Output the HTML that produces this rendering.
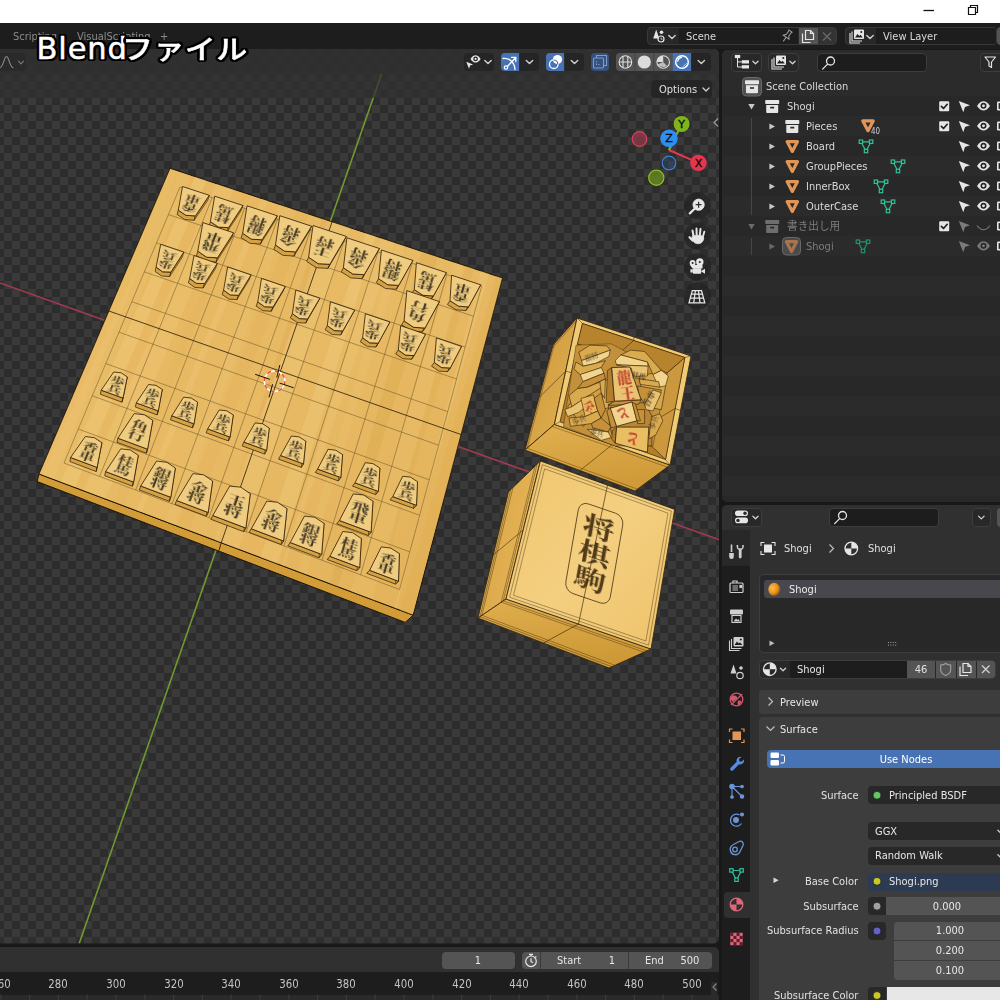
<!DOCTYPE html><html lang="ja"><head><meta charset="utf-8"><title>Blend</title><style>html,body{margin:0;padding:0;background:#181818;}
body{width:1000px;height:1000px;overflow:hidden;position:relative;font-family:"DejaVu Sans","Liberation Sans","Noto Sans CJK JP",sans-serif;font-size:11.2px;color:#d9d9d9;}
#root{position:absolute;left:0;top:0;width:1000px;height:1000px;overflow:hidden;background:#181818;}
.abs{position:absolute;}
.t{position:absolute;white-space:nowrap;line-height:14px;height:14px;transform:scaleX(.885);transform-origin:0 50%;color:#d9d9d9;}
.t.r{transform-origin:100% 50%;text-align:right;}
.t.c{transform-origin:50% 50%;text-align:center;}
.fld{position:absolute;border-radius:4px;box-sizing:border-box;}
svg{display:block;overflow:visible;}
</style></head><body><div id="root"><div class="abs" style="left:0.0px;top:0.0px;width:1000.0px;height:23.0px;background:#fff;border-radius:0px;"></div><svg class="abs" style="left:915.0px;top:0.0px;" width="85.0" height="23.0" viewBox="0 0 85.0 23.0"><path d="M8.500 10.500h10.500" stroke="#111" stroke-width="1.300" fill="none"/><path d="M53.500 7.500h7v7h-7zM55.500 7.500v-2h7v7h-2" stroke="#111" stroke-width="1.200" fill="none"/></svg><div class="abs" style="left:0.0px;top:23.0px;width:1000.0px;height:26.0px;background:#1d1d1d;border-radius:0px;"></div><span class="t " style="left:13.0px;top:29.9px;color:#8c8c8c">Scripting</span><span class="t " style="left:77.0px;top:29.9px;color:#8c8c8c">VisualScripting</span><span class="t " style="left:160.0px;top:29.9px;color:#8c8c8c">+</span><div class="abs" style="left:647.0px;top:27.0px;width:190.0px;height:18.0px;background:#282828;border-radius:4px;border:1px solid #3a3a3a;box-sizing:border-box"></div><div class="abs" style="left:679.0px;top:28.0px;width:119.0px;height:16.0px;background:#1d1d1d;border-radius:0px;"></div><div class="abs" style="left:798.5px;top:28.0px;width:19.5px;height:16.0px;background:#545454;border-radius:0px;"></div><div class="abs" style="left:818.0px;top:28.0px;width:18.0px;height:16.0px;background:#333;border-radius:0 3px 3px 0;"></div><svg class="abs" style="left:0.0px;top:0.0px;pointer-events:none" width="1000.0" height="50.0" viewBox="0 0 1000.0 50.0"><g transform="translate(652 29)" fill="#e6e6e6"><path d="M4.200 0.500L7.200 9.500H1.200z"/><circle cx="9.500" cy="3.200" r="1.800"/><circle cx="9" cy="10" r="3" fill="none" stroke="#e6e6e6" stroke-width="1.200"/><path d="M9 8.500v1.700h1.500" fill="none" stroke="#e6e6e6" stroke-width=".8"/></g><path d="M668.8 35.4l3.2 3.2l3.2 -3.2" fill="none" stroke="#d0d0d0" stroke-width="1.4" stroke-linecap="round" stroke-linejoin="round"/><g transform="translate(780 29) rotate(35 7 7)" fill="none" stroke="#9a9a9a" stroke-width="1.100"><path d="M4.500 1h5M5.500 1v5l-2 2.500h7l-2-2.500v-5M7 8.500v5"/></g><g transform="translate(801.500 29.500)" fill="none" stroke="#e6e6e6" stroke-width="1.200"><path d="M1 4v9h8"/><path d="M4 1h5l3 3v6h-8z"/><path d="M9 1v3h3"/></g><path d="M823 32.500l8 8M831 32.500l-8 8" stroke="#6a6a6a" stroke-width="1.300"/></svg><span class="t " style="left:686.0px;top:29.9px">Scene</span><div class="abs" style="left:844.5px;top:27.0px;width:152.0px;height:18.0px;background:#282828;border-radius:4px;border:1px solid #3a3a3a;box-sizing:border-box"></div><div class="abs" style="left:876.0px;top:28.0px;width:119.5px;height:16.0px;background:#1d1d1d;border-radius:0 3px 3px 0;"></div><div class="abs" style="left:996.5px;top:27.0px;width:10.0px;height:18.0px;background:#545454;border-radius:4px 0 0 4px;"></div><svg class="abs" style="left:0.0px;top:0.0px;pointer-events:none" width="1000.0" height="50.0" viewBox="0 0 1000.0 50.0"><g transform="translate(849.0 29.0)"><path d="M1 4v10h10M3 2.500v9.500h10" fill="none" stroke="#e6e6e6" stroke-width="1.1"/><rect x="5" y="0.500" width="10" height="9.500" rx="1" fill="#e6e6e6"/><path d="M6 8.500l2.500-3.500l1.800 2l1.200-1.300l2.300 2.800z" fill="#1d1d1d"/><circle cx="12.300" cy="3" r="1" fill="#1d1d1d"/></g><path d="M866.8 35.4l3.2 3.2l3.2 -3.2" fill="none" stroke="#d0d0d0" stroke-width="1.4" stroke-linecap="round" stroke-linejoin="round"/></svg><span class="t " style="left:883.0px;top:29.9px">View Layer</span><svg id="vp" width="720" height="895" viewBox="0 49 720 895" style="position:absolute;left:0;top:49px" font-family="'Noto Serif CJK JP','Noto Serif CJK SC',serif" font-weight="700"><defs><pattern id="chk" x="4" y="1" width="16" height="16" patternUnits="userSpaceOnUse"><rect width="16" height="16" fill="#3a3a3a"/><rect width="8" height="8" fill="#2d2d2d"/><rect x="8" y="8" width="8" height="8" fill="#2d2d2d"/></pattern><clipPath id="vpc"><rect x="-10" y="49" width="729" height="894.5" rx="5"/></clipPath></defs><g clip-path="url(#vpc)"><rect x="0" y="49" width="720" height="895" fill="url(#chk)"/><line x1="0" y1="283" x2="720" y2="540" stroke="#a03a50" stroke-width="1.6"/><line x1="382.6" y1="71" x2="79.2" y2="943.5" stroke="#6f9a2e" stroke-width="1.6"/><defs><linearGradient id="wood" x1="0" y1="0" x2="1" y2="1"><stop offset="0" stop-color="#e6b65e"/><stop offset=".5" stop-color="#e8ba64"/><stop offset="1" stop-color="#e2b158"/></linearGradient><clipPath id="bclip"><polygon points="170,168.3 502.5,278 413.2,615.2 39,474"/></clipPath><filter id="tb" x="-20%" y="-20%" width="140%" height="140%"><feGaussianBlur stdDeviation="0.42"/></filter></defs><polygon points="39.0,474.0 413.2,615.2 405.2,622.4 37.0,481.5" fill="#d29c38" stroke="#1e1404" stroke-width="1.0"/><polygon points="170.0,168.3 502.5,278.0 413.2,615.2 39.0,474.0" fill="url(#wood)" stroke="#1e1404" stroke-width="1.0"/><g clip-path="url(#bclip)"><polygon points="169.8,168.3 178.0,171.0 53.8,479.3 30.9,470.6" fill="#f2cf82" opacity="0.18"/><polygon points="179.5,171.5 191.3,175.3 61.5,482.2 42.4,475.0" fill="#f4d48a" opacity="0.14"/><polygon points="195.2,176.6 206.6,180.3 75.1,487.4 60.6,481.9" fill="#f6d991" opacity="0.27"/><polygon points="216.7,183.6 233.7,189.1 105.4,498.9 83.3,490.5" fill="#f4d48a" opacity="0.22"/><polygon points="242.7,192.0 248.5,193.9 123.5,505.8 113.6,502.0" fill="#dba84c" opacity="0.13"/><polygon points="261.8,198.2 268.2,200.4 141.8,512.7 136.2,510.6" fill="#f4d48a" opacity="0.21"/><polygon points="279.9,204.1 291.8,208.0 174.3,525.1 165.6,521.8" fill="#f4d48a" opacity="0.14"/><polygon points="297.0,209.7 309.2,213.7 189.3,530.8 176.8,526.0" fill="#dba84c" opacity="0.17"/><polygon points="322.2,217.9 327.3,219.6 219.9,542.4 216.8,541.2" fill="#d39d40" opacity="0.21"/><polygon points="332.1,221.2 350.2,227.1 238.4,549.4 214.7,540.4" fill="#f6d991" opacity="0.20"/><polygon points="365.9,232.2 376.0,235.5 277.6,564.3 260.4,557.8" fill="#f6d991" opacity="0.25"/><polygon points="381.3,237.2 395.5,241.8 284.2,566.8 282.1,566.0" fill="#f4d48a" opacity="0.20"/><polygon points="397.1,242.3 405.1,245.0 306.1,575.2 298.1,572.1" fill="#f6d991" opacity="0.11"/><polygon points="422.1,250.5 438.3,255.8 337.8,587.2 329.9,584.2" fill="#d39d40" opacity="0.24"/><polygon points="454.5,261.1 464.0,264.1 375.1,601.4 350.5,592.1" fill="#f4d48a" opacity="0.12"/><polygon points="466.2,264.9 474.1,267.4 374.7,601.2 372.3,600.3" fill="#dba84c" opacity="0.28"/><polygon points="481.1,269.7 489.4,272.4 394.2,608.7 396.3,609.5" fill="#f2cf82" opacity="0.26"/><polygon points="496.7,274.8 506.3,277.9 411.3,615.1 399.9,610.8" fill="#dba84c" opacity="0.29"/></g><line x1="180.0" y1="187.0" x2="64.0" y2="463.0" stroke="#6b5526" stroke-width="0.7" opacity="0.75"/><line x1="180.0" y1="187.0" x2="481.7" y2="286.0" stroke="#6b5526" stroke-width="0.7" opacity="0.75"/><line x1="212.2" y1="197.6" x2="99.6" y2="476.4" stroke="#6b5526" stroke-width="0.7" opacity="0.75"/><line x1="168.4" y1="214.6" x2="473.5" y2="316.2" stroke="#6b5526" stroke-width="0.7" opacity="0.75"/><line x1="244.7" y1="208.2" x2="135.7" y2="490.0" stroke="#6b5526" stroke-width="0.7" opacity="0.75"/><line x1="156.5" y1="242.9" x2="465.2" y2="347.1" stroke="#6b5526" stroke-width="0.7" opacity="0.75"/><line x1="277.6" y1="219.0" x2="172.1" y2="503.8" stroke="#6b5526" stroke-width="0.7" opacity="0.75"/><line x1="144.3" y1="271.9" x2="456.6" y2="379.0" stroke="#6b5526" stroke-width="0.7" opacity="0.75"/><line x1="310.7" y1="229.9" x2="209.0" y2="517.6" stroke="#6b5526" stroke-width="0.7" opacity="0.75"/><line x1="131.8" y1="301.7" x2="447.7" y2="411.6" stroke="#6b5526" stroke-width="0.7" opacity="0.75"/><line x1="344.2" y1="240.9" x2="246.2" y2="531.7" stroke="#6b5526" stroke-width="0.7" opacity="0.75"/><line x1="119.0" y1="332.2" x2="438.6" y2="445.2" stroke="#6b5526" stroke-width="0.7" opacity="0.75"/><line x1="378.1" y1="252.0" x2="283.9" y2="545.9" stroke="#6b5526" stroke-width="0.7" opacity="0.75"/><line x1="105.8" y1="363.6" x2="429.3" y2="479.8" stroke="#6b5526" stroke-width="0.7" opacity="0.75"/><line x1="412.3" y1="263.2" x2="322.0" y2="560.3" stroke="#6b5526" stroke-width="0.7" opacity="0.75"/><line x1="92.2" y1="395.8" x2="419.7" y2="515.3" stroke="#6b5526" stroke-width="0.7" opacity="0.75"/><line x1="446.8" y1="274.6" x2="360.6" y2="574.8" stroke="#6b5526" stroke-width="0.7" opacity="0.75"/><line x1="78.3" y1="429.0" x2="409.8" y2="551.9" stroke="#6b5526" stroke-width="0.7" opacity="0.75"/><line x1="481.7" y1="286.0" x2="399.6" y2="589.5" stroke="#6b5526" stroke-width="0.7" opacity="0.75"/><line x1="64.0" y1="463.0" x2="399.6" y2="589.5" stroke="#6b5526" stroke-width="0.7" opacity="0.75"/><line x1="332.3" y1="221.2" x2="221.2" y2="542.9" stroke="#2a1c05" stroke-width="0.9" opacity="0.9"/><line x1="108.6" y1="310.9" x2="461.8" y2="434.8" stroke="#2a1c05" stroke-width="0.9" opacity="0.9"/><line x1="221.2" y1="542.9" x2="219.0" y2="550.3" stroke="#2a1c05" stroke-width="0.9"/><polygon points="178.3,210.2 185.9,215.3 195.4,215.9 194.2,220.3 184.8,219.5 177.2,214.6" fill="#d4a144" stroke="#2a1b05" stroke-width="0.7" stroke-linejoin="round"/><polygon points="209.3,195.3 195.4,215.9 194.2,220.3 207.9,200.3" fill="#b98a30" stroke="#2a1b05" stroke-width="0.5" stroke-linejoin="round"/><polygon points="209.3,195.3 182.5,186.5 178.3,210.2 185.9,215.3 195.4,215.9" fill="#efcc80" stroke="#2a1b05" stroke-width="0.8" stroke-linejoin="round"/><g transform="matrix(-1.0280 -0.3398 0.2341 -0.5682 191.09 203.23)" font-size="14.6" text-anchor="middle" fill="#251f14" opacity=".84" filter="url(#tb)" font-weight="700"><text x="0" y="-1.3">香</text><text x="0" y="12.6">車</text></g><polygon points="210.4,221.7 218.5,227.1 228.5,227.7 227.1,232.0 217.2,231.3 209.1,226.1" fill="#d4a144" stroke="#2a1b05" stroke-width="0.7" stroke-linejoin="round"/><polygon points="243.0,205.5 228.5,227.7 227.1,232.0 241.3,210.4" fill="#b98a30" stroke="#2a1b05" stroke-width="0.5" stroke-linejoin="round"/><polygon points="243.0,205.5 214.7,196.2 210.4,221.7 218.5,227.1 228.5,227.7" fill="#efcc80" stroke="#2a1b05" stroke-width="0.8" stroke-linejoin="round"/><g transform="matrix(-1.0382 -0.3432 0.2268 -0.5738 223.77 214.02)" font-size="15.2" text-anchor="middle" fill="#251f14" opacity=".84" filter="url(#tb)" font-weight="700"><text x="0" y="-1.4">桂</text><text x="0" y="13.0">馬</text></g><polygon points="242.7,233.3 251.4,239.2 262.1,239.8 260.4,244.1 249.9,243.3 241.1,237.7" fill="#d4a144" stroke="#2a1b05" stroke-width="0.7" stroke-linejoin="round"/><polygon points="277.3,215.8 262.1,239.8 260.4,244.1 275.5,220.6" fill="#b98a30" stroke="#2a1b05" stroke-width="0.5" stroke-linejoin="round"/><polygon points="277.3,215.8 247.0,205.8 242.7,233.3 251.4,239.2 262.1,239.8" fill="#efcc80" stroke="#2a1b05" stroke-width="0.8" stroke-linejoin="round"/><g transform="matrix(-1.0486 -0.3466 0.2194 -0.5794 256.77 224.93)" font-size="15.8" text-anchor="middle" fill="#251f14" opacity=".84" filter="url(#tb)" font-weight="700"><text x="0" y="-1.4">銀</text><text x="0" y="13.6">将</text></g><polygon points="275.5,245.1 284.6,251.2 295.8,251.9 294.0,256.1 282.9,255.3 273.8,249.4" fill="#d4a144" stroke="#2a1b05" stroke-width="0.7" stroke-linejoin="round"/><polygon points="311.6,226.2 295.8,251.9 294.0,256.1 309.5,230.9" fill="#b98a30" stroke="#2a1b05" stroke-width="0.5" stroke-linejoin="round"/><polygon points="311.6,226.2 279.8,215.7 275.5,245.1 284.6,251.2 295.8,251.9" fill="#efcc80" stroke="#2a1b05" stroke-width="0.8" stroke-linejoin="round"/><g transform="matrix(-1.0591 -0.3501 0.2119 -0.5852 290.11 235.96)" font-size="16.3" text-anchor="middle" fill="#251f14" opacity=".84" filter="url(#tb)" font-weight="700"><text x="0" y="-1.5">金</text><text x="0" y="14.0">将</text></g><polygon points="308.6,257.2 318.2,263.7 329.9,264.3 327.9,268.4 316.3,267.7 306.7,261.4" fill="#d4a144" stroke="#2a1b05" stroke-width="0.7" stroke-linejoin="round"/><polygon points="346.3,236.4 329.9,264.3 327.9,268.4 344.0,241.1" fill="#b98a30" stroke="#2a1b05" stroke-width="0.5" stroke-linejoin="round"/><polygon points="346.3,236.4 313.0,225.5 308.6,257.2 318.2,263.7 329.9,264.3" fill="#efcc80" stroke="#2a1b05" stroke-width="0.8" stroke-linejoin="round"/><g transform="matrix(-1.0698 -0.3536 0.2042 -0.5910 323.77 247.10)" font-size="17.0" text-anchor="middle" fill="#251f14" opacity=".84" filter="url(#tb)" font-weight="700"><text x="0" y="-1.5">王</text><text x="0" y="14.6">将</text></g><polygon points="343.4,267.8 352.8,274.0 364.2,274.7 362.0,278.7 350.8,277.9 341.3,271.8" fill="#d4a144" stroke="#2a1b05" stroke-width="0.7" stroke-linejoin="round"/><polygon points="379.4,248.5 364.2,274.7 362.0,278.7 376.9,253.0" fill="#b98a30" stroke="#2a1b05" stroke-width="0.5" stroke-linejoin="round"/><polygon points="379.4,248.5 346.9,237.8 343.4,267.8 352.8,274.0 364.2,274.7" fill="#efcc80" stroke="#2a1b05" stroke-width="0.8" stroke-linejoin="round"/><g transform="matrix(-1.0807 -0.3572 0.1963 -0.5970 357.77 258.36)" font-size="16.3" text-anchor="middle" fill="#251f14" opacity=".84" filter="url(#tb)" font-weight="700"><text x="0" y="-1.5">金</text><text x="0" y="14.0">将</text></g><polygon points="378.5,278.7 387.7,284.7 398.7,285.4 396.3,289.3 385.5,288.5 376.3,282.6" fill="#d4a144" stroke="#2a1b05" stroke-width="0.7" stroke-linejoin="round"/><polygon points="412.9,260.4 398.7,285.4 396.3,289.3 410.2,264.9" fill="#b98a30" stroke="#2a1b05" stroke-width="0.5" stroke-linejoin="round"/><polygon points="412.9,260.4 381.4,250.0 378.5,278.7 387.7,284.7 398.7,285.4" fill="#efcc80" stroke="#2a1b05" stroke-width="0.8" stroke-linejoin="round"/><g transform="matrix(-1.0917 -0.3608 0.1882 -0.6030 392.11 269.74)" font-size="15.8" text-anchor="middle" fill="#251f14" opacity=".84" filter="url(#tb)" font-weight="700"><text x="0" y="-1.4">銀</text><text x="0" y="13.6">将</text></g><polygon points="414.3,289.6 423.0,295.3 433.4,296.0 430.8,299.8 420.6,299.0 411.8,293.5" fill="#d4a144" stroke="#2a1b05" stroke-width="0.7" stroke-linejoin="round"/><polygon points="446.4,272.6 433.4,296.0 430.8,299.8 443.5,276.9" fill="#b98a30" stroke="#2a1b05" stroke-width="0.5" stroke-linejoin="round"/><polygon points="446.4,272.6 416.4,262.7 414.3,289.6 423.0,295.3 433.4,296.0" fill="#efcc80" stroke="#2a1b05" stroke-width="0.8" stroke-linejoin="round"/><g transform="matrix(-1.1029 -0.3645 0.1800 -0.6091 426.80 281.25)" font-size="15.2" text-anchor="middle" fill="#251f14" opacity=".84" filter="url(#tb)" font-weight="700"><text x="0" y="-1.4">桂</text><text x="0" y="13.0">馬</text></g><polygon points="450.0,300.7 458.6,306.2 468.6,306.9 465.8,310.6 456.0,309.8 447.4,304.5" fill="#d4a144" stroke="#2a1b05" stroke-width="0.7" stroke-linejoin="round"/><polygon points="480.7,284.8 468.6,306.9 465.8,310.6 477.6,289.0" fill="#b98a30" stroke="#2a1b05" stroke-width="0.5" stroke-linejoin="round"/><polygon points="480.7,284.8 451.6,275.2 450.0,300.7 458.6,306.2 468.6,306.9" fill="#efcc80" stroke="#2a1b05" stroke-width="0.8" stroke-linejoin="round"/><g transform="matrix(-1.1142 -0.3683 0.1716 -0.6153 461.83 292.87)" font-size="14.6" text-anchor="middle" fill="#251f14" opacity=".84" filter="url(#tb)" font-weight="700"><text x="0" y="-1.3">香</text><text x="0" y="12.6">車</text></g><polygon points="197.8,251.2 206.6,257.2 217.5,257.8 216.1,262.2 205.3,261.4 196.5,255.6" fill="#d4a144" stroke="#2a1b05" stroke-width="0.7" stroke-linejoin="round"/><polygon points="233.6,232.8 217.5,257.8 216.1,262.2 232.0,237.7" fill="#b98a30" stroke="#2a1b05" stroke-width="0.5" stroke-linejoin="round"/><polygon points="233.6,232.8 202.9,222.6 197.8,251.2 206.6,257.2 217.5,257.8" fill="#efcc80" stroke="#2a1b05" stroke-width="0.8" stroke-linejoin="round"/><g transform="matrix(-1.0497 -0.3520 0.2327 -0.5885 212.55 242.37)" font-size="16.0" text-anchor="middle" fill="#251f14" opacity=".84" filter="url(#tb)" font-weight="700"><text x="0" y="-1.4">飛</text><text x="0" y="13.8">車</text></g><polygon points="404.1,321.0 413.6,327.3 425.0,328.1 422.3,331.8 411.1,331.0 401.6,324.8" fill="#d4a144" stroke="#2a1b05" stroke-width="0.7" stroke-linejoin="round"/><polygon points="439.4,301.6 425.0,328.1 422.3,331.8 436.4,305.9" fill="#b98a30" stroke="#2a1b05" stroke-width="0.5" stroke-linejoin="round"/><polygon points="439.4,301.6 406.8,290.6 404.1,321.0 413.6,327.3 425.0,328.1" fill="#efcc80" stroke="#2a1b05" stroke-width="0.8" stroke-linejoin="round"/><g transform="matrix(-1.1159 -0.3743 0.1848 -0.6253 417.93 311.38)" font-size="16.0" text-anchor="middle" fill="#251f14" opacity=".84" filter="url(#tb)" font-weight="700"><text x="0" y="-1.4">角</text><text x="0" y="13.8">行</text></g><polygon points="156.1,267.1 162.6,271.8 170.9,272.1 169.7,276.5 161.6,276.0 155.1,271.5" fill="#d4a144" stroke="#2a1b05" stroke-width="0.7" stroke-linejoin="round"/><polygon points="183.8,252.1 170.9,272.1 169.7,276.5 182.4,257.1" fill="#b98a30" stroke="#2a1b05" stroke-width="0.5" stroke-linejoin="round"/><polygon points="183.8,252.1 160.7,244.3 156.1,267.1 162.6,271.8 170.9,272.1" fill="#efcc80" stroke="#2a1b05" stroke-width="0.8" stroke-linejoin="round"/><g transform="matrix(-1.0507 -0.3576 0.2463 -0.5977 167.63 260.09)" font-size="14.0" text-anchor="middle" fill="#251f14" opacity=".84" filter="url(#tb)" font-weight="700"><text x="0" y="-1.3">歩</text><text x="0" y="12.0">兵</text></g><polygon points="189.7,278.5 196.3,283.3 204.6,283.6 203.2,288.0 195.0,287.5 188.4,282.9" fill="#d4a144" stroke="#2a1b05" stroke-width="0.7" stroke-linejoin="round"/><polygon points="217.3,263.4 204.6,283.6 203.2,288.0 215.7,268.4" fill="#b98a30" stroke="#2a1b05" stroke-width="0.5" stroke-linejoin="round"/><polygon points="217.3,263.4 194.0,255.5 189.7,278.5 196.3,283.3 204.6,283.6" fill="#efcc80" stroke="#2a1b05" stroke-width="0.8" stroke-linejoin="round"/><g transform="matrix(-1.0614 -0.3613 0.2387 -0.6038 201.04 271.45)" font-size="14.0" text-anchor="middle" fill="#251f14" opacity=".84" filter="url(#tb)" font-weight="700"><text x="0" y="-1.3">歩</text><text x="0" y="12.0">兵</text></g><polygon points="223.6,290.1 230.2,294.9 238.6,295.3 237.0,299.6 228.8,299.1 222.1,294.5" fill="#d4a144" stroke="#2a1b05" stroke-width="0.7" stroke-linejoin="round"/><polygon points="251.1,274.9 238.6,295.3 237.0,299.6 249.3,279.7" fill="#b98a30" stroke="#2a1b05" stroke-width="0.5" stroke-linejoin="round"/><polygon points="251.1,274.9 227.6,266.9 223.6,290.1 230.2,294.9 238.6,295.3" fill="#efcc80" stroke="#2a1b05" stroke-width="0.8" stroke-linejoin="round"/><g transform="matrix(-1.0722 -0.3650 0.2310 -0.6099 234.80 282.94)" font-size="14.0" text-anchor="middle" fill="#251f14" opacity=".84" filter="url(#tb)" font-weight="700"><text x="0" y="-1.3">歩</text><text x="0" y="12.0">兵</text></g><polygon points="257.8,301.9 264.6,306.7 273.0,307.1 271.2,311.3 262.9,310.7 256.1,306.1" fill="#d4a144" stroke="#2a1b05" stroke-width="0.7" stroke-linejoin="round"/><polygon points="285.3,286.5 273.0,307.1 271.2,311.3 283.2,291.2" fill="#b98a30" stroke="#2a1b05" stroke-width="0.5" stroke-linejoin="round"/><polygon points="285.3,286.5 261.5,278.4 257.8,301.9 264.6,306.7 273.0,307.1" fill="#efcc80" stroke="#2a1b05" stroke-width="0.8" stroke-linejoin="round"/><g transform="matrix(-1.0833 -0.3688 0.2231 -0.6161 268.90 294.56)" font-size="14.0" text-anchor="middle" fill="#251f14" opacity=".84" filter="url(#tb)" font-weight="700"><text x="0" y="-1.3">歩</text><text x="0" y="12.0">兵</text></g><polygon points="292.4,313.7 299.3,318.6 307.7,319.0 305.7,323.1 297.3,322.6 290.4,317.9" fill="#d4a144" stroke="#2a1b05" stroke-width="0.7" stroke-linejoin="round"/><polygon points="319.8,298.2 307.7,319.0 305.7,323.1 317.5,302.8" fill="#b98a30" stroke="#2a1b05" stroke-width="0.5" stroke-linejoin="round"/><polygon points="319.8,298.2 295.8,290.0 292.4,313.7 299.3,318.6 307.7,319.0" fill="#efcc80" stroke="#2a1b05" stroke-width="0.8" stroke-linejoin="round"/><g transform="matrix(-1.0945 -0.3726 0.2150 -0.6225 303.35 306.31)" font-size="14.0" text-anchor="middle" fill="#251f14" opacity=".84" filter="url(#tb)" font-weight="700"><text x="0" y="-1.3">歩</text><text x="0" y="12.0">兵</text></g><polygon points="327.3,325.7 334.3,330.6 342.8,331.0 340.6,335.0 332.2,334.5 325.2,329.8" fill="#d4a144" stroke="#2a1b05" stroke-width="0.7" stroke-linejoin="round"/><polygon points="354.7,310.0 342.8,331.0 340.6,335.0 352.2,314.6" fill="#b98a30" stroke="#2a1b05" stroke-width="0.5" stroke-linejoin="round"/><polygon points="354.7,310.0 330.4,301.8 327.3,325.7 334.3,330.6 342.8,331.0" fill="#efcc80" stroke="#2a1b05" stroke-width="0.8" stroke-linejoin="round"/><g transform="matrix(-1.1059 -0.3765 0.2068 -0.6289 338.15 318.18)" font-size="14.0" text-anchor="middle" fill="#251f14" opacity=".84" filter="url(#tb)" font-weight="700"><text x="0" y="-1.3">歩</text><text x="0" y="12.0">兵</text></g><polygon points="362.6,337.8 369.7,342.8 378.3,343.2 375.8,347.1 367.4,346.6 360.3,341.8" fill="#d4a144" stroke="#2a1b05" stroke-width="0.7" stroke-linejoin="round"/><polygon points="389.9,322.0 378.3,343.2 375.8,347.1 387.2,326.4" fill="#b98a30" stroke="#2a1b05" stroke-width="0.5" stroke-linejoin="round"/><polygon points="389.9,322.0 365.4,313.7 362.6,337.8 369.7,342.8 378.3,343.2" fill="#efcc80" stroke="#2a1b05" stroke-width="0.8" stroke-linejoin="round"/><g transform="matrix(-1.1175 -0.3804 0.1983 -0.6354 373.31 330.18)" font-size="14.0" text-anchor="middle" fill="#251f14" opacity=".84" filter="url(#tb)" font-weight="700"><text x="0" y="-1.3">歩</text><text x="0" y="12.0">兵</text></g><polygon points="398.3,350.1 405.5,355.1 414.1,355.6 411.5,359.3 402.9,358.7 395.7,353.9" fill="#d4a144" stroke="#2a1b05" stroke-width="0.7" stroke-linejoin="round"/><polygon points="425.5,334.2 414.1,355.6 411.5,359.3 422.5,338.4" fill="#b98a30" stroke="#2a1b05" stroke-width="0.5" stroke-linejoin="round"/><polygon points="425.5,334.2 400.7,325.7 398.3,350.1 405.5,355.1 414.1,355.6" fill="#efcc80" stroke="#2a1b05" stroke-width="0.8" stroke-linejoin="round"/><g transform="matrix(-1.1292 -0.3844 0.1897 -0.6420 408.83 342.32)" font-size="14.0" text-anchor="middle" fill="#251f14" opacity=".84" filter="url(#tb)" font-weight="700"><text x="0" y="-1.3">歩</text><text x="0" y="12.0">兵</text></g><polygon points="434.3,362.5 441.6,367.6 450.3,368.0 447.5,371.6 438.9,371.1 431.5,366.2" fill="#d4a144" stroke="#2a1b05" stroke-width="0.7" stroke-linejoin="round"/><polygon points="461.5,346.4 450.3,368.0 447.5,371.6 458.3,350.5" fill="#b98a30" stroke="#2a1b05" stroke-width="0.5" stroke-linejoin="round"/><polygon points="461.5,346.4 436.4,337.9 434.3,362.5 441.6,367.6 450.3,368.0" fill="#efcc80" stroke="#2a1b05" stroke-width="0.8" stroke-linejoin="round"/><g transform="matrix(-1.1412 -0.3885 0.1809 -0.6488 444.71 354.58)" font-size="14.0" text-anchor="middle" fill="#251f14" opacity=".84" filter="url(#tb)" font-weight="700"><text x="0" y="-1.3">歩</text><text x="0" y="12.0">兵</text></g><polygon points="101.2,390.2 123.0,398.1 122.0,402.2 100.4,394.3" fill="#d4a144" stroke="#2a1b05" stroke-width="0.7" stroke-linejoin="round"/><polygon points="123.0,398.1 127.3,376.9 126.7,379.6 122.0,402.2" fill="#b98a30" stroke="#2a1b05" stroke-width="0.5" stroke-linejoin="round"/><polygon points="101.2,390.2 123.0,398.1 127.3,376.9 121.2,372.8 113.7,372.0" fill="#efcc80" stroke="#2a1b05" stroke-width="0.8" stroke-linejoin="round"/><g transform="matrix(1.0990 0.3978 -0.2737 0.6643 116.05 384.99)" font-size="12.8" text-anchor="middle" fill="#251f14" opacity=".84" filter="url(#tb)" font-weight="700"><text x="0" y="-1.2">歩</text><text x="0" y="11.0">兵</text></g><polygon points="136.3,402.9 158.3,410.9 157.1,414.9 135.3,407.0" fill="#d4a144" stroke="#2a1b05" stroke-width="0.7" stroke-linejoin="round"/><polygon points="158.3,410.9 162.3,389.4 161.5,392.1 157.1,414.9" fill="#b98a30" stroke="#2a1b05" stroke-width="0.5" stroke-linejoin="round"/><polygon points="136.3,402.9 158.3,410.9 162.3,389.4 156.0,385.4 148.5,384.5" fill="#efcc80" stroke="#2a1b05" stroke-width="0.8" stroke-linejoin="round"/><g transform="matrix(1.1108 0.4021 -0.2654 0.6714 151.08 397.66)" font-size="12.8" text-anchor="middle" fill="#251f14" opacity=".84" filter="url(#tb)" font-weight="700"><text x="0" y="-1.2">歩</text><text x="0" y="11.0">兵</text></g><polygon points="171.8,415.8 194.0,423.9 192.5,427.8 170.5,419.8" fill="#d4a144" stroke="#2a1b05" stroke-width="0.7" stroke-linejoin="round"/><polygon points="194.0,423.9 197.6,402.2 196.6,404.8 192.5,427.8" fill="#b98a30" stroke="#2a1b05" stroke-width="0.5" stroke-linejoin="round"/><polygon points="171.8,415.8 194.0,423.9 197.6,402.2 191.2,398.0 183.6,397.2" fill="#efcc80" stroke="#2a1b05" stroke-width="0.8" stroke-linejoin="round"/><g transform="matrix(1.1228 0.4065 -0.2570 0.6786 186.49 410.49)" font-size="12.8" text-anchor="middle" fill="#251f14" opacity=".84" filter="url(#tb)" font-weight="700"><text x="0" y="-1.2">歩</text><text x="0" y="11.0">兵</text></g><polygon points="207.7,428.9 230.1,437.1 228.4,440.9 206.1,432.8" fill="#d4a144" stroke="#2a1b05" stroke-width="0.7" stroke-linejoin="round"/><polygon points="230.1,437.1 233.3,415.0 232.1,417.6 228.4,440.9" fill="#b98a30" stroke="#2a1b05" stroke-width="0.5" stroke-linejoin="round"/><polygon points="207.7,428.9 230.1,437.1 233.3,415.0 226.8,410.8 219.2,410.0" fill="#efcc80" stroke="#2a1b05" stroke-width="0.8" stroke-linejoin="round"/><g transform="matrix(1.1350 0.4109 -0.2483 0.6859 222.27 423.46)" font-size="12.8" text-anchor="middle" fill="#251f14" opacity=".84" filter="url(#tb)" font-weight="700"><text x="0" y="-1.2">歩</text><text x="0" y="11.0">兵</text></g><polygon points="243.9,442.1 266.6,450.4 264.6,454.1 242.1,445.9" fill="#d4a144" stroke="#2a1b05" stroke-width="0.7" stroke-linejoin="round"/><polygon points="266.6,450.4 269.3,428.1 268.0,430.5 264.6,454.1" fill="#b98a30" stroke="#2a1b05" stroke-width="0.5" stroke-linejoin="round"/><polygon points="243.9,442.1 266.6,450.4 269.3,428.1 262.7,423.8 255.1,422.9" fill="#efcc80" stroke="#2a1b05" stroke-width="0.8" stroke-linejoin="round"/><g transform="matrix(1.1475 0.4154 -0.2395 0.6933 258.44 436.59)" font-size="12.8" text-anchor="middle" fill="#251f14" opacity=".84" filter="url(#tb)" font-weight="700"><text x="0" y="-1.2">歩</text><text x="0" y="11.0">兵</text></g><polygon points="280.6,455.5 303.5,463.9 301.3,467.4 278.5,459.1" fill="#d4a144" stroke="#2a1b05" stroke-width="0.7" stroke-linejoin="round"/><polygon points="303.5,463.9 305.8,441.2 304.3,443.6 301.3,467.4" fill="#b98a30" stroke="#2a1b05" stroke-width="0.5" stroke-linejoin="round"/><polygon points="280.6,455.5 303.5,463.9 305.8,441.2 299.1,436.9 291.4,436.0" fill="#efcc80" stroke="#2a1b05" stroke-width="0.8" stroke-linejoin="round"/><g transform="matrix(1.1601 0.4200 -0.2304 0.7009 295.00 449.88)" font-size="12.8" text-anchor="middle" fill="#251f14" opacity=".84" filter="url(#tb)" font-weight="700"><text x="0" y="-1.2">歩</text><text x="0" y="11.0">兵</text></g><polygon points="317.6,469.1 340.8,477.5 338.3,480.9 315.2,472.5" fill="#d4a144" stroke="#2a1b05" stroke-width="0.7" stroke-linejoin="round"/><polygon points="340.8,477.5 342.6,454.6 341.0,456.9 338.3,480.9" fill="#b98a30" stroke="#2a1b05" stroke-width="0.5" stroke-linejoin="round"/><polygon points="317.6,469.1 340.8,477.5 342.6,454.6 335.8,450.2 328.1,449.3" fill="#efcc80" stroke="#2a1b05" stroke-width="0.8" stroke-linejoin="round"/><g transform="matrix(1.1729 0.4246 -0.2212 0.7085 331.94 463.32)" font-size="12.8" text-anchor="middle" fill="#251f14" opacity=".84" filter="url(#tb)" font-weight="700"><text x="0" y="-1.2">歩</text><text x="0" y="11.0">兵</text></g><polygon points="355.0,482.8 378.4,491.4 375.7,494.6 352.4,486.1" fill="#d4a144" stroke="#2a1b05" stroke-width="0.7" stroke-linejoin="round"/><polygon points="378.4,491.4 379.9,468.0 378.1,470.2 375.7,494.6" fill="#b98a30" stroke="#2a1b05" stroke-width="0.5" stroke-linejoin="round"/><polygon points="355.0,482.8 378.4,491.4 379.9,468.0 372.9,463.6 365.2,462.7" fill="#efcc80" stroke="#2a1b05" stroke-width="0.8" stroke-linejoin="round"/><g transform="matrix(1.1859 0.4293 -0.2117 0.7163 369.28 476.91)" font-size="12.8" text-anchor="middle" fill="#251f14" opacity=".84" filter="url(#tb)" font-weight="700"><text x="0" y="-1.2">歩</text><text x="0" y="11.0">兵</text></g><polygon points="392.8,496.6 416.5,505.3 413.6,508.4 390.0,499.8" fill="#d4a144" stroke="#2a1b05" stroke-width="0.7" stroke-linejoin="round"/><polygon points="416.5,505.3 417.5,481.7 415.6,483.8 413.6,508.4" fill="#b98a30" stroke="#2a1b05" stroke-width="0.5" stroke-linejoin="round"/><polygon points="392.8,496.6 416.5,505.3 417.5,481.7 410.4,477.1 402.7,476.3" fill="#efcc80" stroke="#2a1b05" stroke-width="0.8" stroke-linejoin="round"/><g transform="matrix(1.1992 0.4341 -0.2020 0.7243 407.03 490.67)" font-size="12.8" text-anchor="middle" fill="#251f14" opacity=".84" filter="url(#tb)" font-weight="700"><text x="0" y="-1.2">歩</text><text x="0" y="11.0">兵</text></g><polygon points="117.9,438.2 147.6,449.2 146.4,453.2 116.9,442.3" fill="#d4a144" stroke="#2a1b05" stroke-width="0.7" stroke-linejoin="round"/><polygon points="147.6,449.2 152.8,420.4 152.0,423.1 146.4,453.2" fill="#b98a30" stroke="#2a1b05" stroke-width="0.5" stroke-linejoin="round"/><polygon points="117.9,438.2 147.6,449.2 152.8,420.4 144.4,414.8 134.2,413.6" fill="#efcc80" stroke="#2a1b05" stroke-width="0.8" stroke-linejoin="round"/><g transform="matrix(1.1239 0.4134 -0.2728 0.6900 137.91 430.92)" font-size="14.6" text-anchor="middle" fill="#251f14" opacity=".84" filter="url(#tb)" font-weight="700"><text x="0" y="-1.3">角</text><text x="0" y="12.5">行</text></g><polygon points="339.4,520.5 371.1,532.3 368.3,535.5 336.7,523.8" fill="#d4a144" stroke="#2a1b05" stroke-width="0.7" stroke-linejoin="round"/><polygon points="371.1,532.3 373.0,501.2 371.2,503.3 368.3,535.5" fill="#b98a30" stroke="#2a1b05" stroke-width="0.5" stroke-linejoin="round"/><polygon points="339.4,520.5 371.1,532.3 373.0,501.2 363.6,495.0 353.2,493.9" fill="#efcc80" stroke="#2a1b05" stroke-width="0.8" stroke-linejoin="round"/><g transform="matrix(1.2010 0.4418 -0.2178 0.7369 358.85 512.48)" font-size="14.6" text-anchor="middle" fill="#251f14" opacity=".84" filter="url(#tb)" font-weight="700"><text x="0" y="-1.3">飛</text><text x="0" y="12.5">車</text></g><polygon points="70.6,457.5 97.1,467.4 96.2,471.5 69.9,461.6" fill="#d4a144" stroke="#2a1b05" stroke-width="0.7" stroke-linejoin="round"/><polygon points="97.1,467.4 101.9,442.7 101.3,445.4 96.2,471.5" fill="#b98a30" stroke="#2a1b05" stroke-width="0.5" stroke-linejoin="round"/><polygon points="70.6,457.5 97.1,467.4 101.9,442.7 94.4,437.7 85.3,436.5" fill="#efcc80" stroke="#2a1b05" stroke-width="0.8" stroke-linejoin="round"/><g transform="matrix(1.1248 0.4205 -0.2891 0.7018 88.48 451.72)" font-size="13.4" text-anchor="middle" fill="#251f14" opacity=".84" filter="url(#tb)" font-weight="700"><text x="0" y="-1.2">香</text><text x="0" y="11.5">車</text></g><polygon points="105.6,471.6 133.6,482.1 132.4,486.2 104.7,475.7" fill="#d4a144" stroke="#2a1b05" stroke-width="0.7" stroke-linejoin="round"/><polygon points="133.6,482.1 138.3,455.3 137.6,458.0 132.4,486.2" fill="#b98a30" stroke="#2a1b05" stroke-width="0.5" stroke-linejoin="round"/><polygon points="105.6,471.6 133.6,482.1 138.3,455.3 130.4,450.0 120.8,448.8" fill="#efcc80" stroke="#2a1b05" stroke-width="0.8" stroke-linejoin="round"/><g transform="matrix(1.1373 0.4252 -0.2805 0.7095 124.37 465.11)" font-size="13.8" text-anchor="middle" fill="#251f14" opacity=".84" filter="url(#tb)" font-weight="700"><text x="0" y="-1.2">桂</text><text x="0" y="11.9">馬</text></g><polygon points="140.7,486.0 170.8,497.3 169.3,501.3 139.4,490.0" fill="#d4a144" stroke="#2a1b05" stroke-width="0.7" stroke-linejoin="round"/><polygon points="170.8,497.3 175.4,468.0 174.5,470.7 169.3,501.3" fill="#b98a30" stroke="#2a1b05" stroke-width="0.5" stroke-linejoin="round"/><polygon points="140.7,486.0 170.8,497.3 175.4,468.0 166.9,462.3 156.6,461.0" fill="#efcc80" stroke="#2a1b05" stroke-width="0.8" stroke-linejoin="round"/><g transform="matrix(1.1499 0.4299 -0.2717 0.7173 160.65 478.68)" font-size="14.4" text-anchor="middle" fill="#251f14" opacity=".84" filter="url(#tb)" font-weight="700"><text x="0" y="-1.3">銀</text><text x="0" y="12.4">将</text></g><polygon points="176.6,500.5 208.2,512.5 206.3,516.2 175.0,504.4" fill="#d4a144" stroke="#2a1b05" stroke-width="0.7" stroke-linejoin="round"/><polygon points="208.2,512.5 212.7,481.0 211.5,483.5 206.3,516.2" fill="#b98a30" stroke="#2a1b05" stroke-width="0.5" stroke-linejoin="round"/><polygon points="176.6,500.5 208.2,512.5 212.7,481.0 203.6,474.8 192.9,473.6" fill="#efcc80" stroke="#2a1b05" stroke-width="0.8" stroke-linejoin="round"/><g transform="matrix(1.1628 0.4347 -0.2626 0.7253 197.34 492.42)" font-size="14.9" text-anchor="middle" fill="#251f14" opacity=".84" filter="url(#tb)" font-weight="700"><text x="0" y="-1.3">金</text><text x="0" y="12.8">将</text></g><polygon points="212.8,515.5 245.9,528.1 243.7,531.7 210.9,519.3" fill="#d4a144" stroke="#2a1b05" stroke-width="0.7" stroke-linejoin="round"/><polygon points="245.9,528.1 250.3,493.8 249.0,496.3 243.7,531.7" fill="#b98a30" stroke="#2a1b05" stroke-width="0.5" stroke-linejoin="round"/><polygon points="212.8,515.5 245.9,528.1 250.3,493.8 240.9,487.2 229.7,486.1" fill="#efcc80" stroke="#2a1b05" stroke-width="0.8" stroke-linejoin="round"/><g transform="matrix(1.1759 0.4396 -0.2533 0.7333 234.42 506.32)" font-size="15.5" text-anchor="middle" fill="#251f14" opacity=".84" filter="url(#tb)" font-weight="700"><text x="0" y="-1.4">玉</text><text x="0" y="13.3">将</text></g><polygon points="251.3,528.8 283.6,541.0 281.2,544.5 249.1,532.4" fill="#d4a144" stroke="#2a1b05" stroke-width="0.7" stroke-linejoin="round"/><polygon points="283.6,541.0 287.0,508.7 285.4,511.0 281.2,544.5" fill="#b98a30" stroke="#2a1b05" stroke-width="0.5" stroke-linejoin="round"/><polygon points="251.3,528.8 283.6,541.0 287.0,508.7 277.6,502.3 266.8,501.1" fill="#efcc80" stroke="#2a1b05" stroke-width="0.8" stroke-linejoin="round"/><g transform="matrix(1.1891 0.4446 -0.2438 0.7416 271.91 520.40)" font-size="14.9" text-anchor="middle" fill="#251f14" opacity=".84" filter="url(#tb)" font-weight="700"><text x="0" y="-1.3">金</text><text x="0" y="12.8">将</text></g><polygon points="290.2,542.5 321.7,554.4 319.0,557.7 287.8,545.9" fill="#d4a144" stroke="#2a1b05" stroke-width="0.7" stroke-linejoin="round"/><polygon points="321.7,554.4 324.1,523.4 322.4,525.7 319.0,557.7" fill="#b98a30" stroke="#2a1b05" stroke-width="0.5" stroke-linejoin="round"/><polygon points="290.2,542.5 321.7,554.4 324.1,523.4 314.9,517.3 304.5,516.1" fill="#efcc80" stroke="#2a1b05" stroke-width="0.8" stroke-linejoin="round"/><g transform="matrix(1.2027 0.4496 -0.2341 0.7499 309.81 534.66)" font-size="14.4" text-anchor="middle" fill="#251f14" opacity=".84" filter="url(#tb)" font-weight="700"><text x="0" y="-1.3">銀</text><text x="0" y="12.4">将</text></g><polygon points="329.9,556.3 359.7,567.6 356.8,570.7 327.2,559.5" fill="#d4a144" stroke="#2a1b05" stroke-width="0.7" stroke-linejoin="round"/><polygon points="359.7,567.6 361.4,538.5 359.5,540.6 356.8,570.7" fill="#b98a30" stroke="#2a1b05" stroke-width="0.5" stroke-linejoin="round"/><polygon points="329.9,556.3 359.7,567.6 361.4,538.5 352.6,532.7 342.8,531.5" fill="#efcc80" stroke="#2a1b05" stroke-width="0.8" stroke-linejoin="round"/><g transform="matrix(1.2164 0.4548 -0.2241 0.7584 348.12 549.08)" font-size="13.8" text-anchor="middle" fill="#251f14" opacity=".84" filter="url(#tb)" font-weight="700"><text x="0" y="-1.2">桂</text><text x="0" y="11.9">馬</text></g><polygon points="369.6,570.3 398.5,581.3 395.4,584.1 366.6,573.3" fill="#d4a144" stroke="#2a1b05" stroke-width="0.7" stroke-linejoin="round"/><polygon points="398.5,581.3 399.4,553.6 397.4,555.6 395.4,584.1" fill="#b98a30" stroke="#2a1b05" stroke-width="0.5" stroke-linejoin="round"/><polygon points="369.6,570.3 398.5,581.3 399.4,553.6 390.8,548.1 381.3,546.9" fill="#efcc80" stroke="#2a1b05" stroke-width="0.8" stroke-linejoin="round"/><g transform="matrix(1.2304 0.4600 -0.2139 0.7671 386.85 563.67)" font-size="13.4" text-anchor="middle" fill="#251f14" opacity=".84" filter="url(#tb)" font-weight="700"><text x="0" y="-1.2">香</text><text x="0" y="11.5">車</text></g><defs><filter id="tb2" x="-20%" y="-20%" width="140%" height="140%"><feGaussianBlur stdDeviation="0.5"/></filter></defs><defs><linearGradient id="ocl" x1="0" y1="0" x2="1" y2="0.4"><stop offset="0" stop-color="#d7a446"/><stop offset="1" stop-color="#e6b556"/></linearGradient><linearGradient id="ocf" x1="0" y1="0" x2="0.2" y2="1"><stop offset="0" stop-color="#e0ae4e"/><stop offset="1" stop-color="#cd9936"/></linearGradient><linearGradient id="oct" x1="0" y1="0" x2="1" y2="1"><stop offset="0" stop-color="#f0c66e"/><stop offset=".5" stop-color="#f4cf80"/><stop offset="1" stop-color="#eec26a"/></linearGradient></defs><polygon points="540.4,461.0 506.0,599.0 478.0,618.0 508.5,491.8" fill="url(#ocl)" stroke="#33220a" stroke-width="0.8" stroke-linejoin="round"/><polygon points="506.0,599.0 651.0,649.0 609.0,668.0 478.0,618.0" fill="url(#ocf)" stroke="#33220a" stroke-width="0.8" stroke-linejoin="round"/><polygon points="540.4,461.0 674.6,509.4 651.0,649.0 506.0,599.0" fill="url(#oct)" stroke="#33220a" stroke-width="0.8" stroke-linejoin="round"/><line x1="503.2" y1="600.9" x2="646.8" y2="650.9" stroke="#33220a" stroke-width="0.5" opacity="0.8"/><line x1="537.2" y1="464.1" x2="503.2" y2="600.9" stroke="#33220a" stroke-width="0.5" opacity="0.8"/><line x1="501.2" y1="602.2" x2="643.9" y2="652.2" stroke="#33220a" stroke-width="0.5" opacity="0.8"/><line x1="535.0" y1="466.2" x2="501.2" y2="602.2" stroke="#33220a" stroke-width="0.5" opacity="0.8"/><line x1="481.9" y1="615.3" x2="614.9" y2="665.3" stroke="#33220a" stroke-width="0.5" opacity="0.8"/><line x1="513.0" y1="487.5" x2="481.9" y2="615.3" stroke="#33220a" stroke-width="0.5" opacity="0.8"/><line x1="480.0" y1="616.7" x2="611.9" y2="666.7" stroke="#33220a" stroke-width="0.5" opacity="0.8"/><line x1="510.7" y1="489.6" x2="480.0" y2="616.7" stroke="#33220a" stroke-width="0.5" opacity="0.8"/><polygon points="542.4,464.7 671.4,511.2 648.6,645.2 509.6,597.2" fill="none" stroke="#33220a" stroke-width="0.5" opacity="0.8"/><polygon points="544.6,468.8 668.0,513.2 645.9,641.0 513.5,595.3" fill="none" stroke="#33220a" stroke-width="0.5" opacity="0.8"/><line x1="607.5" y1="485.2" x2="578.5" y2="624.0" stroke="#33220a" stroke-width="0.7" opacity="0.9"/><line x1="578.5" y1="624.0" x2="543.5" y2="643.0" stroke="#33220a" stroke-width="0.7" opacity="0.9"/><line x1="523.2" y1="530.0" x2="493.2" y2="554.9" stroke="#33220a" stroke-width="0.6" opacity="0.9"/><g transform="matrix(0.9460 0.3230 -0.1700 0.9850 594.30 553.40)"><rect x="-23.5" y="-45.5" width="47" height="91" rx="9" fill="none" stroke="#4a3414" stroke-width="0.9" opacity=".85"/><g transform="scale(1.38 1)" font-size="24" text-anchor="middle" fill="#3a2810" opacity=".88" filter="url(#tb2)" font-weight="700"><text x="0" y="-17.5">将</text><text x="0" y="8.5">棋</text><text x="0" y="35">駒</text></g></g><defs><linearGradient id="ibl" x1="0" y1="0" x2="1" y2="1"><stop offset="0" stop-color="#c9953a"/><stop offset="1" stop-color="#e4b352"/></linearGradient><linearGradient id="ibf" x1="0" y1="0" x2="0.3" y2="1"><stop offset="0" stop-color="#e2b050"/><stop offset="1" stop-color="#cf9a38"/></linearGradient></defs><polygon points="577.0,318.0 554.4,424.4 525.0,450.0 553.0,345.0" fill="url(#ibl)" stroke="#33220a" stroke-width="0.8" stroke-linejoin="round"/><polygon points="554.4,424.4 670.0,465.0 635.0,491.0 525.0,450.0" fill="url(#ibf)" stroke="#33220a" stroke-width="0.8" stroke-linejoin="round"/><line x1="565.7" y1="371.2" x2="539.0" y2="397.5" stroke="#33220a" stroke-width="0.6" opacity="0.9"/><line x1="612.2" y1="444.7" x2="580.0" y2="470.5" stroke="#33220a" stroke-width="0.6" opacity="0.9"/><line x1="576.3" y1="321.2" x2="552.2" y2="348.1" stroke="#33220a" stroke-width="0.5" opacity="0.7"/><line x1="552.0" y1="426.4" x2="667.2" y2="467.1" stroke="#33220a" stroke-width="0.5" opacity="0.7"/><line x1="527.1" y1="448.2" x2="637.5" y2="489.2" stroke="#33220a" stroke-width="0.5" opacity="0.7"/><line x1="554.7" y1="343.1" x2="527.1" y2="448.2" stroke="#33220a" stroke-width="0.5" opacity="0.7"/><polygon points="577.0,318.0 691.0,356.0 670.0,465.0 554.4,424.4" fill="#f1ca74" stroke="#33220a" stroke-width="0.8" stroke-linejoin="round"/><polygon points="582.5,323.5 684.8,357.5 665.5,459.5 560.0,421.8" fill="#b37e2a" stroke="#33220a" stroke-width="0.7" stroke-linejoin="round"/><polygon points="684.8,357.5 665.5,459.5 651.6,446.0 667.0,372.9" fill="#cc983e" stroke="#33220a" stroke-width="0.6" stroke-linejoin="round"/><polygon points="582.5,323.5 684.8,357.5 667.0,372.9 577.4,343.8" fill="#b8832d" stroke="#33220a" stroke-width="0.6" stroke-linejoin="round"/><line x1="634.0" y1="337.0" x2="633.6" y2="340.5" stroke="#33220a" stroke-width="0.6" opacity="0.9"/><line x1="612.2" y1="444.7" x2="612.8" y2="440.6" stroke="#33220a" stroke-width="0.6" opacity="0.9"/><line x1="565.7" y1="371.2" x2="571.2" y2="372.6" stroke="#33220a" stroke-width="0.6" opacity="0.9"/><line x1="680.5" y1="410.5" x2="675.1" y2="408.5" stroke="#33220a" stroke-width="0.6" opacity="0.9"/><line x1="577.0" y1="318.0" x2="582.5" y2="323.5" stroke="#33220a" stroke-width="0.5" opacity="0.9"/><line x1="691.0" y1="356.0" x2="684.8" y2="357.5" stroke="#33220a" stroke-width="0.5" opacity="0.9"/><line x1="670.0" y1="465.0" x2="665.5" y2="459.5" stroke="#33220a" stroke-width="0.5" opacity="0.9"/><line x1="554.4" y1="424.4" x2="560.0" y2="421.8" stroke="#33220a" stroke-width="0.5" opacity="0.9"/><line x1="633.6" y1="340.5" x2="611.0" y2="360.6" stroke="#33220a" stroke-width="0.6" opacity="0.9"/><line x1="675.1" y1="408.5" x2="661.4" y2="416.6" stroke="#33220a" stroke-width="0.6" opacity="0.9"/><polygon points="576.0,345.2 611.0,343.8 667.0,373.2 653.0,446.0 615.2,446.0 563.4,426.4" fill="#c3913c" stroke="#33220a" stroke-width="0.4" stroke-linejoin="round"/><polygon points="601.2,381.6 611.0,378.8 611.0,406.8 602.6,409.6" fill="#dcae54" stroke="#33220a" stroke-width="0.6" stroke-linejoin="round"/><polygon points="639.0,376.0 653.0,373.2 665.6,385.8 661.4,409.6 644.6,406.8" fill="#d7a74e" stroke="#33220a" stroke-width="0.6" stroke-linejoin="round"/><polygon points="567.6,406.8 583.0,385.8 601.2,381.6 602.6,409.6 583.0,426.4" fill="#cf9f46" stroke="#33220a" stroke-width="0.6" stroke-linejoin="round"/><polygon points="608.2,404.0 644.6,402.6 653.0,418.0 651.6,446.0 615.2,443.2 609.6,426.4" fill="#b88634" stroke="#33220a" stroke-width="0.6" stroke-linejoin="round"/><polygon points="578.8,352.2 590.0,345.2 606.8,345.9 610.3,350.1 597.0,355.0 581.6,360.6" fill="#d9aa4e" stroke="#33220a" stroke-width="0.6" stroke-linejoin="round"/><polygon points="581.6,360.6 597.0,355.0 610.3,350.1 608.9,356.4 595.6,363.4 583.0,366.2" fill="#f2d48c" stroke="#33220a" stroke-width="0.6" stroke-linejoin="round"/><polygon points="576.0,362.0 583.0,366.2 595.6,363.4 605.4,360.6 601.2,367.6 580.2,374.6 573.9,369.0" fill="#d9aa4e" stroke="#33220a" stroke-width="0.6" stroke-linejoin="round"/><polygon points="580.2,374.6 601.2,367.6 604.0,373.2 583.0,381.6" fill="#f2d48c" stroke="#33220a" stroke-width="0.6" stroke-linejoin="round"/><polygon points="583.0,381.6 604.0,373.2 605.4,378.8 587.2,387.2 577.4,388.6" fill="#c4913a" stroke="#33220a" stroke-width="0.6" stroke-linejoin="round"/><polygon points="569.0,395.6 577.4,388.6 587.2,387.2 601.2,381.6 604.0,385.8 588.6,395.6 571.8,406.8" fill="#d9aa4e" stroke="#33220a" stroke-width="0.6" stroke-linejoin="round"/><polygon points="620.8,355.0 630.6,350.1 644.6,351.5 661.4,370.4 653.0,374.6 647.4,362.0" fill="#d9aa4e" stroke="#33220a" stroke-width="0.6" stroke-linejoin="round"/><polygon points="615.2,360.6 620.8,355.0 647.4,362.0 648.1,366.2 616.6,364.8" fill="#f2d48c" stroke="#33220a" stroke-width="0.6" stroke-linejoin="round"/><polygon points="616.6,364.8 648.1,366.2 647.4,376.0 633.4,376.0 631.3,368.3" fill="#e9c272" stroke="#33220a" stroke-width="0.6" stroke-linejoin="round"/><polygon points="653.0,374.6 661.4,370.4 668.4,376.0 665.6,385.8 658.6,387.2" fill="#f2d48c" stroke="#33220a" stroke-width="0.6" stroke-linejoin="round"/><polygon points="639.0,378.8 658.6,381.6 660.0,387.2 640.4,384.4" fill="#d9aa4e" stroke="#33220a" stroke-width="0.6" stroke-linejoin="round"/><polygon points="637.6,385.8 653.0,388.6 661.4,390.0 658.6,398.4 644.6,404.0 639.0,395.6" fill="#c4913a" stroke="#33220a" stroke-width="0.6" stroke-linejoin="round"/><polygon points="644.6,404.0 653.0,390.0 661.4,392.8 653.0,411.0 646.0,409.6" fill="#e9c272" stroke="#33220a" stroke-width="0.6" stroke-linejoin="round"/><polygon points="651.6,416.6 660.0,413.8 662.8,420.8 655.8,434.8 648.8,439.0" fill="#d9aa4e" stroke="#33220a" stroke-width="0.6" stroke-linejoin="round"/><polygon points="636.2,409.6 644.6,409.6 644.6,423.6 637.6,423.6" fill="#c4913a" stroke="#33220a" stroke-width="0.6" stroke-linejoin="round"/><polygon points="564.8,409.6 571.8,406.8 588.6,395.6 595.6,398.4 578.8,412.4 567.6,416.6" fill="#e9c272" stroke="#33220a" stroke-width="0.6" stroke-linejoin="round"/><polygon points="580.9,398.4 593.5,394.9 597.7,411.0 585.1,416.6" fill="#e6b95e" stroke="#33220a" stroke-width="0.6" stroke-linejoin="round"/><polygon points="569.0,418.0 585.1,416.6 597.7,411.0 601.2,418.0 591.4,423.6 570.4,426.4" fill="#d9aa4e" stroke="#33220a" stroke-width="0.6" stroke-linejoin="round"/><polygon points="591.4,423.6 601.2,418.0 611.0,426.4 608.2,432.0 592.8,427.8" fill="#c4913a" stroke="#33220a" stroke-width="0.6" stroke-linejoin="round"/><polygon points="594.2,398.4 601.2,392.8 605.4,409.6 601.2,418.0 597.7,411.0" fill="#c4913a" stroke="#33220a" stroke-width="0.6" stroke-linejoin="round"/><polygon points="599.8,381.6 605.4,378.8 604.7,398.4 601.2,392.8" fill="#d9aa4e" stroke="#33220a" stroke-width="0.6" stroke-linejoin="round"/><polygon points="587.2,429.2 608.2,432.0 611.0,437.6 601.2,440.4" fill="#f2d48c" stroke="#33220a" stroke-width="0.6" stroke-linejoin="round"/><polygon points="606.8,411.0 611.0,406.8 616.6,426.4 611.0,427.8" fill="#c4913a" stroke="#33220a" stroke-width="0.6" stroke-linejoin="round"/><polygon points="607.5,370.4 611.7,367.6 614.5,401.2 606.1,402.6" fill="#b07e2c" stroke="#33220a" stroke-width="0.6" stroke-linejoin="round"/><polygon points="614.5,401.2 641.1,399.8 639.0,404.0 608.2,405.4" fill="#c4913a" stroke="#33220a" stroke-width="0.6" stroke-linejoin="round"/><polygon points="611.7,367.6 629.9,366.9 641.1,399.8 614.5,401.2" fill="#e9c272" stroke="#33220a" stroke-width="0.8" stroke-linejoin="round"/><polygon points="610.3,408.2 632.0,401.9 636.9,420.8 616.6,426.4" fill="#f2d48c" stroke="#33220a" stroke-width="0.8" stroke-linejoin="round"/><polygon points="632.0,401.9 635.5,404.0 640.4,420.8 636.9,420.8" fill="#c4913a" stroke="#33220a" stroke-width="0.6" stroke-linejoin="round"/><polygon points="612.4,430.6 616.6,427.1 615.2,443.2 611.7,439.0" fill="#b07e2c" stroke="#33220a" stroke-width="0.6" stroke-linejoin="round"/><polygon points="616.6,427.1 648.8,427.1 647.4,452.3 615.2,443.2" fill="#e9bd62" stroke="#33220a" stroke-width="0.8" stroke-linejoin="round"/><text transform="translate(623.9 376.0) rotate(-8)" font-size="14.5" text-anchor="middle" dominant-baseline="central" font-weight="900" fill="#bf3b2b" opacity="0.90" filter="url(#tb)">龍</text><text transform="translate(627.4 391.7) rotate(-8)" font-size="14.5" text-anchor="middle" dominant-baseline="central" font-weight="900" fill="#bf3b2b" opacity="0.90" filter="url(#tb)">王</text><text transform="translate(624.0 415.2) rotate(150)" font-size="13.0" text-anchor="middle" dominant-baseline="central" font-weight="900" fill="#bf3b2b" opacity="0.90" filter="url(#tb)">と</text><text transform="translate(632.3 439.7) rotate(190)" font-size="14.0" text-anchor="middle" dominant-baseline="central" font-weight="900" fill="#bf3b2b" opacity="0.90" filter="url(#tb)">と</text><text transform="translate(589.0 405.7) rotate(20)" font-size="11.5" text-anchor="middle" dominant-baseline="central" font-weight="900" fill="#bf3b2b" opacity="0.90" filter="url(#tb)">全</text><text transform="translate(639.0 375.3) rotate(10)" font-size="7.0" text-anchor="middle" dominant-baseline="central" font-weight="900" fill="#3a3020" opacity="0.70" filter="url(#tb)">桂馬</text><text transform="translate(648.1 398.4) rotate(-60)" font-size="8.0" text-anchor="middle" dominant-baseline="central" font-weight="900" fill="#3a3020" opacity="0.70" filter="url(#tb)">香車</text><text transform="translate(578.8 419.4) rotate(-25)" font-size="7.0" text-anchor="middle" dominant-baseline="central" font-weight="900" fill="#3a3020" opacity="0.60" filter="url(#tb)">歩兵</text><text transform="translate(597.0 432.0) rotate(15)" font-size="7.0" text-anchor="middle" dominant-baseline="central" font-weight="900" fill="#3a3020" opacity="0.60" filter="url(#tb)">歩兵</text><text transform="translate(653.0 422.2) rotate(-70)" font-size="7.0" text-anchor="middle" dominant-baseline="central" font-weight="900" fill="#3a3020" opacity="0.60" filter="url(#tb)">歩兵</text><text transform="translate(591.4 356.4) rotate(-20)" font-size="7.0" text-anchor="middle" dominant-baseline="central" font-weight="900" fill="#3a3020" opacity="0.50" filter="url(#tb)">銀将</text><rect x="0" y="49" width="720" height="25" fill="#303030" opacity=".97"/><rect x="0" y="74" width="720" height="24" fill="#303030" opacity=".72"/><rect x="-6" y="53" width="32" height="18" rx="4" fill="#2a2a2a"/><path d="M-.5 67.800c4 0 4.500-11.300 7-11.300s3 11.300 7 11.300" fill="none" stroke="#8a8a8a" stroke-width="1.100"/><path d="M18.4 61.2l2.6 2.6l2.6 -2.6" fill="none" stroke="#777" stroke-width="1.2" stroke-linecap="round" stroke-linejoin="round"/><rect x="464" y="53" width="30" height="18" rx="4" fill="#252525"/><g transform="translate(466.500 55.500) scale(.82)"></g><g transform="translate(470.500 55.300) scale(.78)"><g transform="translate(0.0 0.0)"><path d="M0 4.7C2.2 1.3 4.5 0 6.5 0S10.800 1.3 13 4.700C10.800 8 8.500 9.300 6.500 9.300S2.200 8 0 4.700z" fill="#e6e6e6"/><circle cx="6.5" cy="4.6" r="3" fill="#252525"/><circle cx="6.5" cy="4.6" r="1.4" fill="#e6e6e6"/></g></g><path d="M466.300 61.800l6.800 2.600l-3 1l-1.100 3.300z" fill="#e6e6e6"/><path d="M484.8 60.4l3.2 3.2l3.2 -3.2" fill="none" stroke="#d0d0d0" stroke-width="1.4" stroke-linecap="round" stroke-linejoin="round"/><path d="M505 53h14.300v18H505a4 4 0 0 1-4-4v-10a4 4 0 0 1 4-4z" fill="#4772b3"/><path d="M519.300 53H535a4 4 0 0 1 4 4v10a4 4 0 0 1-4 4h-15.700z" fill="#252525"/><g fill="none" stroke="#fff" stroke-width="1.300" stroke-linecap="round"><path d="M503 58.500c6-1 11.500 3.500 12 11"/><path d="M507.300 66.500l8-8.500M511.500 57.300h4.300v4.300"/><circle cx="506" cy="67.500" r="1.700"/></g><path d="M526.3 60.4l3.2 3.2l3.2 -3.2" fill="none" stroke="#d0d0d0" stroke-width="1.4" stroke-linecap="round" stroke-linejoin="round"/><path d="M550 53h14.300v18H550a4 4 0 0 1-4-4v-10a4 4 0 0 1 4-4z" fill="#4772b3"/><path d="M564.300 53H580a4 4 0 0 1 4 4v10a4 4 0 0 1-4 4h-15.700z" fill="#252525"/><circle cx="557.500" cy="59.500" r="4.600" fill="#fff"/><circle cx="553.800" cy="64.200" r="4.300" fill="none" stroke="#fff" stroke-width="1.300"/><path d="M553.500 60a4.300 4.300 0 0 1 4.300 4.300" stroke="#4772b3" stroke-width="1.200" fill="none"/><path d="M571.3 60.4l3.2 3.2l3.2 -3.2" fill="none" stroke="#d0d0d0" stroke-width="1.4" stroke-linecap="round" stroke-linejoin="round"/><rect x="591" y="53" width="18" height="18" rx="4" fill="#36517d"/><g fill="none" stroke="#7d9ccd" stroke-width="1.100"><rect x="593.500" y="58" width="10" height="10" rx="1"/><path d="M596.500 58v-2.500h10v10h-3"/><path d="M596.500 61v3.500h3.500" stroke-dasharray="1.300 1.300"/></g><path d="M620 53h53v18h-53a4 4 0 0 1-4-4v-10a4 4 0 0 1 4-4z" fill="#545454"/><rect x="672.800" y="53" width="18.500" height="18" fill="#4772b3"/><path d="M691.300 53H707a4 4 0 0 1 4 4v10a4 4 0 0 1-4 4h-15.700z" fill="#252525"/><path d="M634.900 53v18M653.800 53v18" stroke="#444" stroke-width="1"/><g fill="none" stroke="#e0e0e0" stroke-width="1.100"><circle cx="625.400" cy="62" r="6.300"/><path d="M619.100 62h12.600M623 56.200v11.600M627.800 56.200v11.600" /></g><circle cx="644.300" cy="62" r="6.600" fill="#dcdcdc"/><circle cx="663.200" cy="62" r="6.300" fill="none" stroke="#dcdcdc" stroke-width="1.100"/><path d="M663.200 55.700a6.300 6.300 0 0 0-6.300 6.300h6.300z" fill="#dcdcdc"/><path d="M657.500 64.500c3 3 7 3 9.500 1.500l-3.800-4z" fill="#bdbdbd"/><circle cx="682" cy="62" r="6.300" fill="none" stroke="#fff" stroke-width="1.500"/><path d="M677.800 61a4.500 4.500 0 0 1 3.800-3.600" fill="none" stroke="#fff" stroke-width="1.300" stroke-linecap="round"/><path d="M683 66.800l3.500-3.500M685 67l2-2" stroke="#fff" stroke-width=".7"/><path d="M698.1 60.4l3.2 3.2l3.2 -3.2" fill="none" stroke="#d0d0d0" stroke-width="1.4" stroke-linecap="round" stroke-linejoin="round"/><rect x="651.200" y="80" width="60.800" height="18" rx="4" fill="#252525" opacity=".95"/><path d="M703.0 88.0l3.0 3.0l3.0 -3.0" fill="none" stroke="#d0d0d0" stroke-width="1.3" stroke-linecap="round" stroke-linejoin="round"/><path d="M718 118.500l-4 4l4 4" fill="none" stroke="#9a9a9a" stroke-width="1.200"/><line x1="669" y1="150" x2="698.400" y2="162.900" stroke="#e8354f" stroke-width="2"/><line x1="669" y1="150" x2="681.600" y2="124" stroke="#7eb51b" stroke-width="2"/><circle cx="639.500" cy="139" r="7.300" fill="#a23a50" fill-opacity=".62" stroke="#d8405a" stroke-width="1.200"/><circle cx="669" cy="163" r="6.800" fill="#2b4f85" fill-opacity=".35" stroke="#3d7fd0" stroke-width="1.200"/><circle cx="656.300" cy="177.800" r="7.600" fill="#6f961f" fill-opacity=".7" stroke="#8bc220" stroke-width="1.200"/><circle cx="681.600" cy="124" r="8" fill="#7eb51b"/><circle cx="698.400" cy="162.900" r="8.200" fill="#e8354f"/><circle cx="669" cy="138.300" r="8.700" fill="#2f8ff0"/><g font-family="'DejaVu Sans',sans-serif" font-weight="400" font-size="11" text-anchor="middle" fill="#0c0c0c" stroke="#0c0c0c" stroke-width=".35"><text x="681.600" y="127.800">Y</text><text x="698.400" y="166.700">X</text><text x="669" y="142.100">Z</text></g><circle cx="697.500" cy="205.6" r="13.600" fill="#222" opacity=".72"/><circle cx="697.500" cy="236.2" r="13.600" fill="#222" opacity=".72"/><circle cx="697.500" cy="266.8" r="13.600" fill="#222" opacity=".72"/><circle cx="697.500" cy="295.8" r="13.600" fill="#222" opacity=".72"/><g fill="none" stroke="#e6e6e6"><circle cx="698.600" cy="204.700" r="5.600" fill="#e6e6e6" stroke-width="1"/><path d="M694.400 209l-4.600 4.400" stroke-width="2.200" stroke-linecap="round"/><path d="M695.600 204.700h6M698.600 201.700v6" stroke="#2b2b2b" stroke-width="1.200"/></g><g fill="#e6e6e6" stroke="#e6e6e6" stroke-linecap="round"><path d="M691.500 238.500c1.500 3.500 3.500 5.300 6.500 5.300s5.500-2.300 6-5.800l-2.500-2.500h-8.500z" stroke-width=".6"/><path d="M693.800 237.500l-1.300-7" stroke-width="2"/><path d="M696.700 236.500l-.2-8" stroke-width="2"/><path d="M699.600 236.800l.9-7.800" stroke-width="2"/><path d="M702.500 238l1.800-6.300" stroke-width="1.900"/><path d="M692.500 240.500l-3-3.300" stroke-width="2.100"/></g><g fill="#e6e6e6"><circle cx="692.600" cy="262.900" r="2.900"/><circle cx="699.800" cy="262" r="3.700"/><rect x="692.800" y="268.300" width="8.400" height="5.500" rx="1"/><path d="M701.200 271l3.800-2.200v4.900l-3.800-2.200z"/><path d="M690.400 269.300h2.400v3.200h-2.400z"/><path d="M690 265h12.500v3.500h-10z"/></g><circle cx="692.600" cy="262.900" r="1" fill="#2b2b2b"/><circle cx="699.800" cy="262" r="1.100" fill="#2b2b2b"/><g fill="none" stroke="#e6e6e6" stroke-width="1.250"><path d="M692.300 290.500h9.200l3.300 12.300h-15.800z"/><path d="M695.400 290.500l-1.700 12.300M698.400 290.500l1.600 12.300M691.400 294.200h11.200M690.300 298.200h13.400"/></g><circle cx="274.600" cy="381.200" r="10.300" fill="none" stroke="#fff" stroke-width="1.500"/><circle cx="274.600" cy="381.200" r="10.300" fill="none" stroke="#f04a28" stroke-width="1.500" stroke-dasharray="4.050 4.040"/><g stroke="#15120a" stroke-width="1"><path d="M255.200 374.300l14.700 5.100M279.500 383l14.100 4.800M279.800 365l-3 12.600M272.600 384.200l-3.600 13.200"/></g></g></svg><div class="abs" style="left:0.0px;top:947.0px;width:719.0px;height:60.0px;background:#303030;border-radius:0 5px 0 0;"></div><div class="abs" style="left:441.5px;top:951.5px;width:73.5px;height:17.5px;background:#545454;border-radius:4px;"></div><span class="t c" style="left:478.0px;width:200px;margin-left:-100px;top:953.9px;color:#e6e6e6">1</span><div class="abs" style="left:521.8px;top:951.5px;width:190.4px;height:17.5px;background:#545454;border-radius:4px;"></div><div class="abs" style="left:540.2px;top:951.5px;width:1.0px;height:17.5px;background:#3a3a3a;border-radius:0px;"></div><div class="abs" style="left:628.4px;top:951.5px;width:1.0px;height:17.5px;background:#3a3a3a;border-radius:0px;"></div><svg class="abs" style="left:522.0px;top:951.0px;" width="20.0" height="19.0" viewBox="0 0 20.0 19.0"><g fill="none" stroke="#e6e6e6" stroke-width="1.200"><circle cx="9" cy="10.300" r="5.300"/><path d="M9 7.300v3.200l2 1.200M7 3.300h4M9 3.300v1.700M13.300 5.500l1 1"/></g></svg><span class="t " style="left:556.5px;top:953.9px;color:#e6e6e6">Start</span><span class="t r" style="right:385.0px;top:953.9px;color:#e6e6e6">1</span><span class="t " style="left:645.0px;top:953.9px;color:#e6e6e6">End</span><span class="t r" style="right:300.5px;top:953.9px;color:#e6e6e6">500</span><div class="abs" style="left:0.0px;top:972.0px;width:719.0px;height:22.5px;background:#1d1d1d;border-radius:0px;"></div><div class="abs" style="left:0.0px;top:994.5px;width:719.0px;height:6.0px;background:#2a2a2a;border-radius:0px;"></div><svg class="abs" style="left:0;top:0" width="720" height="1000" viewBox="0 0 720 1000"><rect x="0.3" y="994.500" width="1" height="6" fill="#3d3d3d"/><rect x="29.1" y="994.500" width="1" height="6" fill="#3d3d3d"/><rect x="57.9" y="994.500" width="1" height="6" fill="#3d3d3d"/><rect x="86.7" y="994.500" width="1" height="6" fill="#3d3d3d"/><rect x="115.5" y="994.500" width="1" height="6" fill="#3d3d3d"/><rect x="144.3" y="994.500" width="1" height="6" fill="#3d3d3d"/><rect x="173.1" y="994.500" width="1" height="6" fill="#3d3d3d"/><rect x="201.9" y="994.500" width="1" height="6" fill="#3d3d3d"/><rect x="230.7" y="994.500" width="1" height="6" fill="#3d3d3d"/><rect x="259.5" y="994.500" width="1" height="6" fill="#3d3d3d"/><rect x="288.3" y="994.500" width="1" height="6" fill="#3d3d3d"/><rect x="317.1" y="994.500" width="1" height="6" fill="#3d3d3d"/><rect x="345.9" y="994.500" width="1" height="6" fill="#3d3d3d"/><rect x="374.7" y="994.500" width="1" height="6" fill="#3d3d3d"/><rect x="403.5" y="994.500" width="1" height="6" fill="#3d3d3d"/><rect x="432.3" y="994.500" width="1" height="6" fill="#3d3d3d"/><rect x="461.1" y="994.500" width="1" height="6" fill="#3d3d3d"/><rect x="489.9" y="994.500" width="1" height="6" fill="#3d3d3d"/><rect x="518.7" y="994.500" width="1" height="6" fill="#3d3d3d"/><rect x="547.5" y="994.500" width="1" height="6" fill="#3d3d3d"/><rect x="576.3" y="994.500" width="1" height="6" fill="#3d3d3d"/><rect x="605.1" y="994.500" width="1" height="6" fill="#3d3d3d"/><rect x="633.9" y="994.500" width="1" height="6" fill="#3d3d3d"/><rect x="662.7" y="994.500" width="1" height="6" fill="#3d3d3d"/><rect x="691.5" y="994.500" width="1" height="6" fill="#3d3d3d"/><rect x="711" y="982" width="6" height="18" rx="2" fill="#2b2b2b"/><path d="M716.500 983.500l-3.500 3.500l3.500 3.500" fill="none" stroke="#8a8a8a" stroke-width="1.100"/></svg><span class="t c" style="left:0.8px;width:200px;margin-left:-100px;top:977.4px;color:#c4c4c4;font-size:11.5px">260</span><span class="t c" style="left:58.4px;width:200px;margin-left:-100px;top:977.4px;color:#c4c4c4;font-size:11.5px">280</span><span class="t c" style="left:116.0px;width:200px;margin-left:-100px;top:977.4px;color:#c4c4c4;font-size:11.5px">300</span><span class="t c" style="left:173.6px;width:200px;margin-left:-100px;top:977.4px;color:#c4c4c4;font-size:11.5px">320</span><span class="t c" style="left:231.2px;width:200px;margin-left:-100px;top:977.4px;color:#c4c4c4;font-size:11.5px">340</span><span class="t c" style="left:288.8px;width:200px;margin-left:-100px;top:977.4px;color:#c4c4c4;font-size:11.5px">360</span><span class="t c" style="left:346.4px;width:200px;margin-left:-100px;top:977.4px;color:#c4c4c4;font-size:11.5px">380</span><span class="t c" style="left:404.0px;width:200px;margin-left:-100px;top:977.4px;color:#c4c4c4;font-size:11.5px">400</span><span class="t c" style="left:461.6px;width:200px;margin-left:-100px;top:977.4px;color:#c4c4c4;font-size:11.5px">420</span><span class="t c" style="left:519.2px;width:200px;margin-left:-100px;top:977.4px;color:#c4c4c4;font-size:11.5px">440</span><span class="t c" style="left:576.8px;width:200px;margin-left:-100px;top:977.4px;color:#c4c4c4;font-size:11.5px">460</span><span class="t c" style="left:634.4px;width:200px;margin-left:-100px;top:977.4px;color:#c4c4c4;font-size:11.5px">480</span><span class="t c" style="left:692.0px;width:200px;margin-left:-100px;top:977.4px;color:#c4c4c4;font-size:11.5px">500</span><div class="abs" style="left:722.0px;top:50.0px;width:290.0px;height:451.5px;background:#282828;border-radius:5px 0 0 5px;"></div><div class="abs" style="left:722.0px;top:50.0px;width:290.0px;height:26.0px;background:#2b2b2b;border-radius:5px 0 0 0;"></div><div class="abs" style="left:722.0px;top:76.0px;width:290.0px;height:20.0px;background:#2b2b2b;border-radius:0px;"></div><div class="abs" style="left:722.0px;top:116.0px;width:290.0px;height:20.0px;background:#2b2b2b;border-radius:0px;"></div><div class="abs" style="left:722.0px;top:156.0px;width:290.0px;height:20.0px;background:#2b2b2b;border-radius:0px;"></div><div class="abs" style="left:722.0px;top:196.0px;width:290.0px;height:20.0px;background:#2b2b2b;border-radius:0px;"></div><div class="abs" style="left:722.0px;top:236.0px;width:290.0px;height:20.0px;background:#2b2b2b;border-radius:0px;"></div><div class="abs" style="left:722.0px;top:276.0px;width:290.0px;height:20.0px;background:#2b2b2b;border-radius:0px;"></div><div class="abs" style="left:722.0px;top:316.0px;width:290.0px;height:20.0px;background:#2b2b2b;border-radius:0px;"></div><div class="abs" style="left:722.0px;top:356.0px;width:290.0px;height:20.0px;background:#2b2b2b;border-radius:0px;"></div><div class="abs" style="left:722.0px;top:396.0px;width:290.0px;height:20.0px;background:#2b2b2b;border-radius:0px;"></div><div class="abs" style="left:722.0px;top:436.0px;width:290.0px;height:20.0px;background:#2b2b2b;border-radius:0px;"></div><div class="abs" style="left:722.0px;top:476.0px;width:290.0px;height:20.0px;background:#2b2b2b;border-radius:0px;"></div><div class="abs" style="left:730.6px;top:53.0px;width:31.4px;height:18.5px;background:#282828;border-radius:4px;border:1px solid #3d3d3d;box-sizing:border-box"></div><div class="abs" style="left:767.6px;top:53.0px;width:31.4px;height:18.5px;background:#282828;border-radius:4px;border:1px solid #3d3d3d;box-sizing:border-box"></div><div class="abs" style="left:816.6px;top:53.0px;width:110.0px;height:18.5px;background:#1d1d1d;border-radius:4px;border:1px solid #3d3d3d;box-sizing:border-box"></div><div class="abs" style="left:980.4px;top:53.0px;width:30.0px;height:18.5px;background:#282828;border-radius:4px;border:1px solid #3d3d3d;box-sizing:border-box"></div><span class="t " style="left:766.2px;top:80.4px">Scene Collection</span><span class="t " style="left:786.6px;top:100.4px">Shogi</span><span class="t " style="left:806.4px;top:120.4px">Pieces</span><span class="t " style="left:870.5px;top:124.8px;color:#d0d0d0;font-size:8px">40</span><span class="t " style="left:806.4px;top:140.3px">Board</span><span class="t " style="left:806.4px;top:160.3px">GroupPieces</span><span class="t " style="left:806.4px;top:180.3px">InnerBox</span><span class="t " style="left:806.4px;top:200.3px">OuterCase</span><span class="t " style="left:786.6px;top:220.3px;color:#7c7c7c;transform:scaleX(.95)">書き出し用</span><span class="t " style="left:806.4px;top:240.3px;color:#7c7c7c">Shogi</span><svg class="abs" style="left:0;top:0" width="1000" height="510" viewBox="0 0 1000 510"><g fill="#e6e6e6"><rect x="734.800" y="54.900" width="5.400" height="3.200"/><rect x="741.800" y="60.200" width="7.200" height="3.300"/><rect x="741.800" y="65.200" width="7.200" height="3.300"/><path d="M737.500 58v9h4.300M737.500 61.900h4.300" fill="none" stroke="#e6e6e6" stroke-width="1"/></g><path d="M752.9 61.2l2.6 2.6l2.6 -2.6" fill="none" stroke="#d0d0d0" stroke-width="1.3" stroke-linecap="round" stroke-linejoin="round"/><g transform="translate(771.0 55.0)"><path d="M1 4v10h10M3 2.500v9.500h10" fill="none" stroke="#e6e6e6" stroke-width="1.1"/><rect x="5" y="0.500" width="10" height="9.500" rx="1" fill="#e6e6e6"/><path d="M6 8.500l2.500-3.500l1.800 2l1.200-1.300l2.300 2.800z" fill="#1d1d1d"/><circle cx="12.300" cy="3" r="1" fill="#1d1d1d"/></g><path d="M789.9 61.2l2.6 2.6l2.6 -2.6" fill="none" stroke="#d0d0d0" stroke-width="1.3" stroke-linecap="round" stroke-linejoin="round"/><g transform="translate(821.0 55.5)" fill="none" stroke="#e6e6e6" stroke-width="1.3" stroke-linecap="round"><circle cx="9.5" cy="5.5" r="4"/><path d="M6.600 8.600l-5 5"/></g><path d="M985 57h10.500l-4 5v5.500l-2.500-1.500v-4z" fill="none" stroke="#e6e6e6" stroke-width="1.200" stroke-linejoin="round"/><rect x="742.500" y="77.500" width="19" height="18.500" rx="4" fill="#505050" stroke="#6a6a6a" stroke-width="1"/><g transform="translate(744.0 78.8)" fill="#e6e6e6"><rect x="1" y="1.5" width="14" height="4" rx=".8"/><path d="M2 6.5h12v7a1 1 0 0 1-1 1h-10a1 1 0 0 1-1-1zM6 8.3v1.8h4v-1.8z" fill-rule="evenodd"/></g><path d="M748.3 103.9h6.400l-3.200 5.600z" fill="#c8c8c8"/><g transform="translate(764.2 98.5)" fill="#e6e6e6"><rect x="1" y="1.5" width="14" height="4" rx=".8"/><path d="M2 6.5h12v7a1 1 0 0 1-1 1h-10a1 1 0 0 1-1-1zM6 8.3v1.8h4v-1.8z" fill-rule="evenodd"/></g><g transform="translate(939.2 101.2)"><rect x="0" y="0" width="10" height="10" rx="1" fill="#e6e6e6"/><path d="M2.2 5.2l2.1 2.1l3.7-4.2" fill="none" stroke="#222" stroke-width="1.7" stroke-linecap="round" stroke-linejoin="round"/></g><path transform="translate(958.8 101.0)" d="M0 0l11.2 4.3l-5 1.6l-1.7 5.3z" fill="#e6e6e6"/><g transform="translate(977.0 101.2)"><path d="M0 4.7C2.2 1.3 4.5 0 6.5 0S10.800 1.3 13 4.700C10.800 8 8.500 9.300 6.500 9.300S2.200 8 0 4.700z" fill="#e6e6e6"/><circle cx="6.5" cy="4.6" r="3" fill="#282828"/><circle cx="6.5" cy="4.6" r="1.4" fill="#e6e6e6"/></g><g transform="translate(997.0 101.5)"><rect x="0" y="0" width="12" height="9" rx="1.2" fill="#e6e6e6"/><rect x="1.6" y="1.6" width="6" height="5.800" fill="#282828"/></g><rect x="750.900" y="118" width="1" height="97" fill="#4a4a4a"/><path d="M769.4 123.5v6l5.600-3z" fill="#c8c8c8"/><g transform="translate(784.3 118.5)" fill="#e6e6e6"><rect x="1" y="1.5" width="14" height="4" rx=".8"/><path d="M2 6.5h12v7a1 1 0 0 1-1 1h-10a1 1 0 0 1-1-1zM6 8.3v1.8h4v-1.8z" fill-rule="evenodd"/></g><path transform="translate(860.0 117.5)" d="M2.800 3.400h10.400L8 13.200z" fill="none" stroke="#e19658" stroke-width="3.200" stroke-linejoin="round"/><g transform="translate(939.2 121.2)"><rect x="0" y="0" width="10" height="10" rx="1" fill="#e6e6e6"/><path d="M2.2 5.2l2.1 2.1l3.7-4.2" fill="none" stroke="#222" stroke-width="1.7" stroke-linecap="round" stroke-linejoin="round"/></g><path transform="translate(958.8 121.0)" d="M0 0l11.2 4.3l-5 1.6l-1.7 5.3z" fill="#e6e6e6"/><g transform="translate(977.0 121.2)"><path d="M0 4.7C2.2 1.3 4.5 0 6.5 0S10.800 1.3 13 4.700C10.800 8 8.500 9.300 6.500 9.300S2.200 8 0 4.700z" fill="#e6e6e6"/><circle cx="6.5" cy="4.6" r="3" fill="#282828"/><circle cx="6.5" cy="4.6" r="1.4" fill="#e6e6e6"/></g><g transform="translate(997.0 121.5)"><rect x="0" y="0" width="12" height="9" rx="1.2" fill="#e6e6e6"/><rect x="1.6" y="1.6" width="6" height="5.800" fill="#282828"/></g><path d="M769.4 143.5v6l5.600-3z" fill="#c8c8c8"/><path transform="translate(784.3 138.2)" d="M2.800 3.400h10.400L8 13.200z" fill="none" stroke="#e19658" stroke-width="3.200" stroke-linejoin="round"/><g transform="translate(858.0 138.3)" fill="none" stroke="#2fc29a" stroke-width="1.2"><path d="M3 3.5h10L8 13z"/><rect x="1.2" y="1.7" width="3.4" height="3.4" fill="#282828"/><rect x="11.4" y="1.7" width="3.4" height="3.4" fill="#282828"/><rect x="6.3" y="11" width="3.4" height="3.4" fill="#282828"/></g><path transform="translate(958.8 141.0)" d="M0 0l11.2 4.3l-5 1.6l-1.7 5.3z" fill="#e6e6e6"/><g transform="translate(977.0 141.2)"><path d="M0 4.7C2.2 1.3 4.5 0 6.5 0S10.800 1.3 13 4.700C10.800 8 8.500 9.300 6.500 9.300S2.200 8 0 4.700z" fill="#e6e6e6"/><circle cx="6.5" cy="4.6" r="3" fill="#282828"/><circle cx="6.5" cy="4.6" r="1.4" fill="#e6e6e6"/></g><g transform="translate(997.0 141.5)"><rect x="0" y="0" width="12" height="9" rx="1.2" fill="#e6e6e6"/><rect x="1.6" y="1.6" width="6" height="5.800" fill="#282828"/></g><path d="M769.4 163.5v6l5.600-3z" fill="#c8c8c8"/><path transform="translate(784.3 158.2)" d="M2.800 3.400h10.400L8 13.200z" fill="none" stroke="#e19658" stroke-width="3.200" stroke-linejoin="round"/><g transform="translate(890.0 158.3)" fill="none" stroke="#2fc29a" stroke-width="1.2"><path d="M3 3.5h10L8 13z"/><rect x="1.2" y="1.7" width="3.4" height="3.4" fill="#282828"/><rect x="11.4" y="1.7" width="3.4" height="3.4" fill="#282828"/><rect x="6.3" y="11" width="3.4" height="3.4" fill="#282828"/></g><path transform="translate(958.8 161.0)" d="M0 0l11.2 4.3l-5 1.6l-1.7 5.3z" fill="#e6e6e6"/><g transform="translate(977.0 161.2)"><path d="M0 4.7C2.2 1.3 4.5 0 6.5 0S10.800 1.3 13 4.700C10.800 8 8.500 9.300 6.500 9.300S2.200 8 0 4.700z" fill="#e6e6e6"/><circle cx="6.5" cy="4.6" r="3" fill="#282828"/><circle cx="6.5" cy="4.6" r="1.4" fill="#e6e6e6"/></g><g transform="translate(997.0 161.5)"><rect x="0" y="0" width="12" height="9" rx="1.2" fill="#e6e6e6"/><rect x="1.6" y="1.6" width="6" height="5.800" fill="#282828"/></g><path d="M769.4 183.5v6l5.600-3z" fill="#c8c8c8"/><path transform="translate(784.3 178.2)" d="M2.800 3.400h10.400L8 13.200z" fill="none" stroke="#e19658" stroke-width="3.200" stroke-linejoin="round"/><g transform="translate(873.0 178.3)" fill="none" stroke="#2fc29a" stroke-width="1.2"><path d="M3 3.5h10L8 13z"/><rect x="1.2" y="1.7" width="3.4" height="3.4" fill="#282828"/><rect x="11.4" y="1.7" width="3.4" height="3.4" fill="#282828"/><rect x="6.3" y="11" width="3.4" height="3.4" fill="#282828"/></g><path transform="translate(958.8 181.0)" d="M0 0l11.2 4.3l-5 1.6l-1.7 5.3z" fill="#e6e6e6"/><g transform="translate(977.0 181.2)"><path d="M0 4.7C2.2 1.3 4.5 0 6.5 0S10.800 1.3 13 4.700C10.800 8 8.500 9.300 6.500 9.300S2.200 8 0 4.700z" fill="#e6e6e6"/><circle cx="6.5" cy="4.6" r="3" fill="#282828"/><circle cx="6.5" cy="4.6" r="1.4" fill="#e6e6e6"/></g><g transform="translate(997.0 181.5)"><rect x="0" y="0" width="12" height="9" rx="1.2" fill="#e6e6e6"/><rect x="1.6" y="1.6" width="6" height="5.800" fill="#282828"/></g><path d="M769.4 203.5v6l5.600-3z" fill="#c8c8c8"/><path transform="translate(784.3 198.2)" d="M2.800 3.400h10.400L8 13.200z" fill="none" stroke="#e19658" stroke-width="3.200" stroke-linejoin="round"/><g transform="translate(880.0 198.3)" fill="none" stroke="#2fc29a" stroke-width="1.2"><path d="M3 3.5h10L8 13z"/><rect x="1.2" y="1.7" width="3.4" height="3.4" fill="#282828"/><rect x="11.4" y="1.7" width="3.4" height="3.4" fill="#282828"/><rect x="6.3" y="11" width="3.4" height="3.4" fill="#282828"/></g><path transform="translate(958.8 201.0)" d="M0 0l11.2 4.3l-5 1.6l-1.7 5.3z" fill="#e6e6e6"/><g transform="translate(977.0 201.2)"><path d="M0 4.7C2.2 1.3 4.5 0 6.5 0S10.800 1.3 13 4.700C10.800 8 8.500 9.300 6.500 9.300S2.200 8 0 4.700z" fill="#e6e6e6"/><circle cx="6.5" cy="4.6" r="3" fill="#282828"/><circle cx="6.5" cy="4.6" r="1.4" fill="#e6e6e6"/></g><g transform="translate(997.0 201.5)"><rect x="0" y="0" width="12" height="9" rx="1.2" fill="#e6e6e6"/><rect x="1.6" y="1.6" width="6" height="5.800" fill="#282828"/></g><path d="M748.3 223.9h6.400l-3.200 5.600z" fill="#6a6a6a"/><g transform="translate(764.2 218.5)" fill="#6e6e6e"><rect x="1" y="1.5" width="14" height="4" rx=".8"/><path d="M2 6.5h12v7a1 1 0 0 1-1 1h-10a1 1 0 0 1-1-1zM6 8.3v1.8h4v-1.8z" fill-rule="evenodd"/></g><g transform="translate(939.2 221.2)"><rect x="0" y="0" width="10" height="10" rx="1" fill="#e6e6e6"/><path d="M2.2 5.2l2.1 2.1l3.7-4.2" fill="none" stroke="#222" stroke-width="1.7" stroke-linecap="round" stroke-linejoin="round"/></g><path transform="translate(958.8 221.0)" d="M0 0l11.2 4.3l-5 1.6l-1.7 5.3z" fill="#7a7a7a"/><path transform="translate(977.0 222.5)" d="M0 3C2.500 6.500 4.500 7.200 6.500 7.200S10.500 6.500 13 3" fill="none" stroke="#7a7a7a" stroke-width="1.1"/><g transform="translate(997.0 221.5)"><rect x="0" y="0" width="12" height="9" rx="1.2" fill="#e6e6e6"/><rect x="1.6" y="1.6" width="6" height="5.800" fill="#282828"/></g><rect x="750.900" y="238" width="1" height="17" fill="#4a4a4a"/><path d="M769.4 243.5v6l5.600-3z" fill="#6a6a6a"/><rect x="782.500" y="237.5" width="18" height="17.500" rx="4" fill="#4a4a4a" stroke="#686868" stroke-width="1"/><path transform="translate(783.5 238.2)" d="M2.800 3.400h10.400L8 13.200z" fill="none" stroke="#a87450" stroke-width="3.200" stroke-linejoin="round"/><g transform="translate(855.0 238.3)" fill="none" stroke="#239072" stroke-width="1.2"><path d="M3 3.5h10L8 13z"/><rect x="1.2" y="1.7" width="3.4" height="3.4" fill="#282828"/><rect x="11.4" y="1.7" width="3.4" height="3.4" fill="#282828"/><rect x="6.3" y="11" width="3.4" height="3.4" fill="#282828"/></g><path transform="translate(958.8 241.0)" d="M0 0l11.2 4.3l-5 1.6l-1.7 5.3z" fill="#7a7a7a"/><g transform="translate(977.0 241.2)"><path d="M0 4.7C2.2 1.3 4.5 0 6.5 0S10.800 1.3 13 4.700C10.800 8 8.500 9.300 6.500 9.300S2.200 8 0 4.700z" fill="#7a7a7a"/><circle cx="6.5" cy="4.6" r="3" fill="#282828"/><circle cx="6.5" cy="4.6" r="1.4" fill="#7a7a7a"/></g><g transform="translate(997.0 241.5)"><rect x="0" y="0" width="12" height="9" rx="1.2" fill="#e6e6e6"/><rect x="1.6" y="1.6" width="6" height="5.800" fill="#282828"/></g></svg><div class="abs" style="left:722.0px;top:505.0px;width:290.0px;height:500.0px;background:#303030;border-radius:5px 0 0 0;"></div><div class="abs" style="left:722.0px;top:530.0px;width:28.0px;height:470.0px;background:#1d1d1d;border-radius:0px;"></div><div class="abs" style="left:722.0px;top:530.0px;width:28.0px;height:36.0px;background:#282828;border-radius:0px;"></div><div class="abs" style="left:724.0px;top:892.0px;width:26.0px;height:25.5px;background:#303030;border-radius:4px 0 0 4px;"></div><div class="abs" style="left:730.6px;top:507.6px;width:31.4px;height:19.0px;background:#282828;border-radius:4px;border:1px solid #3d3d3d;box-sizing:border-box"></div><div class="abs" style="left:828.6px;top:507.6px;width:110.0px;height:19.0px;background:#1d1d1d;border-radius:4px;border:1px solid #3d3d3d;box-sizing:border-box"></div><div class="abs" style="left:971.5px;top:507.6px;width:19.5px;height:19.0px;background:#282828;border-radius:4px;border:1px solid #3d3d3d;box-sizing:border-box"></div><div class="abs" style="left:997.0px;top:507.6px;width:10.0px;height:19.0px;background:#545454;border-radius:4px 0 0 4px;"></div><span class="t " style="left:784.4px;top:541.9px;color:#e0e0e0">Shogi</span><span class="t " style="left:867.6px;top:541.9px;color:#e0e0e0">Shogi</span><div class="abs" style="left:758.5px;top:574.0px;width:250.0px;height:79.2px;background:#282828;border-radius:4px;border:1px solid #3d3d3d;box-sizing:border-box"></div><div class="abs" style="left:764.2px;top:580.4px;width:240.0px;height:17.8px;background:#47474d;border-radius:3px;"></div><span class="t " style="left:789.3px;top:582.7px;color:#ececec">Shogi</span><div class="abs" style="left:758.5px;top:659.8px;width:237.0px;height:18.8px;background:#282828;border-radius:4px;border:1px solid #3d3d3d;box-sizing:border-box"></div><div class="abs" style="left:789.5px;top:660.8px;width:117.5px;height:16.8px;background:#1d1d1d;border-radius:0px;"></div><div class="abs" style="left:907.0px;top:660.8px;width:28.0px;height:16.8px;background:#545454;border-radius:0px;"></div><div class="abs" style="left:936.0px;top:660.8px;width:19.5px;height:16.8px;background:#545454;border-radius:0px;"></div><div class="abs" style="left:956.5px;top:660.8px;width:19.0px;height:16.8px;background:#545454;border-radius:0px;"></div><div class="abs" style="left:976.5px;top:660.8px;width:18.5px;height:16.8px;background:#545454;border-radius:0 3px 3px 0;"></div><span class="t " style="left:796.8px;top:662.6px;color:#e6e6e6">Shogi</span><span class="t c" style="left:921.0px;width:200px;margin-left:-100px;top:662.6px;color:#e0e0e0">46</span><div class="abs" style="left:758.5px;top:689.5px;width:250.0px;height:24.2px;background:#3d3d3d;border-radius:4px;"></div><span class="t " style="left:780.0px;top:696.0px;color:#e6e6e6">Preview</span><div class="abs" style="left:758.5px;top:716.6px;width:250.0px;height:300.0px;background:#3d3d3d;border-radius:4px 0 0 0;"></div><span class="t " style="left:780.0px;top:723.2px;color:#e6e6e6">Surface</span><div class="abs" style="left:766.6px;top:750.4px;width:240.0px;height:17.8px;background:#4772b3;border-radius:4px;"></div><span class="t c" style="left:906.0px;width:200px;margin-left:-100px;top:752.7px;color:#fff">Use Nodes</span><span class="t r" style="right:141.5px;top:788.6px;color:#e0e0e0">Surface</span><div class="abs" style="left:868.0px;top:786.4px;width:140.0px;height:17.8px;background:#282828;border-radius:4px 0 0 4px;"></div><span class="t " style="left:889.0px;top:788.6px;color:#e6e6e6">Principled BSDF</span><div class="abs" style="left:868.0px;top:822.4px;width:140.0px;height:17.6px;background:#282828;border-radius:4px 0 0 4px;"></div><span class="t " style="left:875.0px;top:824.6px;color:#e6e6e6">GGX</span><div class="abs" style="left:868.0px;top:847.0px;width:140.0px;height:17.8px;background:#282828;border-radius:4px 0 0 4px;"></div><span class="t " style="left:875.0px;top:849.3px;color:#e6e6e6">Random Walk</span><span class="t r" style="right:141.5px;top:874.6px;color:#e0e0e0">Base Color</span><div class="abs" style="left:868.0px;top:872.5px;width:140.0px;height:18.0px;background:#2c3a52;border-radius:4px 0 0 4px;"></div><span class="t " style="left:889.0px;top:874.6px;color:#e6e6e6">Shogi.png</span><span class="t r" style="right:141.5px;top:899.6px;color:#e0e0e0">Subsurface</span><div class="abs" style="left:868.0px;top:897.4px;width:18.0px;height:17.8px;background:#282828;border-radius:4px 0 0 4px;"></div><div class="abs" style="left:886.0px;top:897.4px;width:122.0px;height:17.8px;background:#545454;border-radius:0px;"></div><span class="t c" style="left:946.5px;width:200px;margin-left:-100px;top:899.6px;color:#e6e6e6">0.000</span><span class="t r" style="right:141.5px;top:924.4px;color:#e0e0e0">Subsurface Radius</span><div class="abs" style="left:868.0px;top:922.0px;width:18.0px;height:18.0px;background:#282828;border-radius:4px;"></div><div class="abs" style="left:893.5px;top:922.0px;width:115.0px;height:58.0px;background:#545454;border-radius:4px 0 0 4px;"></div><div class="abs" style="left:893.5px;top:940.3px;width:115.0px;height:1.0px;background:#3d3d3d;border-radius:0px;"></div><div class="abs" style="left:893.5px;top:960.2px;width:115.0px;height:1.0px;background:#3d3d3d;border-radius:0px;"></div><span class="t c" style="left:949.5px;width:200px;margin-left:-100px;top:924.4px;color:#e6e6e6">1.000</span><span class="t c" style="left:949.5px;width:200px;margin-left:-100px;top:943.7px;color:#e6e6e6">0.200</span><span class="t c" style="left:949.5px;width:200px;margin-left:-100px;top:963.7px;color:#e6e6e6">0.100</span><span class="t r" style="right:141.5px;top:988.9px;color:#e0e0e0">Subsurface Color</span><div class="abs" style="left:868.0px;top:986.5px;width:18.0px;height:18.0px;background:#282828;border-radius:4px 0 0 4px;"></div><div class="abs" style="left:886.6px;top:986.5px;width:122.0px;height:18.0px;background:#e7e7e7;border-radius:0px;"></div><svg class="abs" style="left:0;top:0" width="1000" height="1000" viewBox="0 0 1000 1000"><g><rect x="735" y="510.500" width="13" height="5.600" rx="2.800" fill="#e6e6e6"/><rect x="735" y="517.600" width="13" height="5.600" rx="2.800" fill="#e6e6e6"/><circle cx="745" cy="513.300" r="1.700" fill="#282828"/><circle cx="738" cy="520.400" r="1.700" fill="#282828"/></g><path d="M752.9 516.2l2.6 2.6l2.6 -2.6" fill="none" stroke="#d0d0d0" stroke-width="1.3" stroke-linecap="round" stroke-linejoin="round"/><g transform="translate(833.0 510.0)" fill="none" stroke="#e6e6e6" stroke-width="1.3" stroke-linecap="round"><circle cx="9.5" cy="5.5" r="4"/><path d="M6.600 8.600l-5 5"/></g><path d="M978.5 516.1l2.8 2.8l2.8 -2.8" fill="none" stroke="#d0d0d0" stroke-width="1.3" stroke-linecap="round" stroke-linejoin="round"/><g fill="#cfcfcf" stroke="none"><path d="M730.700 544.500h1.600v7.500h-1.600z"/><path d="M729.200 553h4.600v3.800a2.300 2.300 0 0 1-4.600 0z"/><path d="M736.600 545c-.3 3.500 1.400 4.500 2.200 5v7a1.400 1.400 0 0 0 2.800 0v-7c.8-.5 2.500-1.500 2.200-5h-1.600v3.300h-4v-3.300z"/></g><g fill="none" stroke="#cfcfcf" stroke-width="1.200"><rect x="730" y="583" width="13" height="9.500" rx="1"/><path d="M733 583v-2h4v2"/><path d="M732.500 586h5.500M732.500 588h5.500M732.500 590h5.500" stroke-width=".9"/><rect x="740" y="585.500" width="1.500" height="2" fill="#cfcfcf"/></g><g fill="#cfcfcf"><rect x="730" y="609.500" width="13" height="5" rx="1"/><path d="M732 615.500h9v7h-9z" fill="none" stroke="#cfcfcf" stroke-width="1.200"/><path d="M733.500 621.500l2.500-3l1.500 1.500l1-1l1.500 2.500z"/></g><g transform="translate(728.5 636.5)"><path d="M1 4v10h10M3 2.500v9.500h10" fill="none" stroke="#cfcfcf" stroke-width="1.1"/><rect x="5" y="0.500" width="10" height="9.500" rx="1" fill="#cfcfcf"/><path d="M6 8.500l2.500-3.500l1.800 2l1.200-1.300l2.300 2.800z" fill="#1d1d1d"/><circle cx="12.300" cy="3" r="1" fill="#1d1d1d"/></g><g fill="#cfcfcf"><path d="M733.500 664.500l3 9h-6z"/><circle cx="741" cy="668" r="1.800"/><circle cx="740" cy="675.500" r="3.200" fill="none" stroke="#cfcfcf" stroke-width="1.200"/></g><g><circle cx="736.500" cy="699.500" r="6.300" fill="none" stroke="#d0576a" stroke-width="1.300"/><path d="M732.300 695.800c1.800-.8 3.600-.3 4.600 1c1 1.300 0 2.200-1.200 2.600c-1.400.5-1.300 1.800-2.300 2.200c-1.200.4-2.400-1.300-2.700-2.800c-.2-1.300.5-2.500 1.600-3z" fill="#d0576a"/><path d="M738.200 700.800c1.200-.5 2.800-.2 3.300.7c-.5 1.800-1.700 3.200-3.300 3.900c-.8-1.400-.9-3.600 0-4.600z" fill="#d0576a"/><path d="M731 705l11.200-11" stroke="#d0576a" stroke-width="1.100"/></g><g><rect x="732.500" y="731.500" width="8.500" height="8.500" fill="#e19658"/><path d="M729.500 732v-3h3M741 729h3v3M744 739.500v3h-3M732.500 742.500h-3v-3" fill="none" stroke="#e19658" stroke-width="1.200"/></g><path d="M741.500 757a3.800 3.800 0 0 0-4.800 4.800l-6 6a1.700 1.700 0 0 0 2.400 2.400l6-6a3.800 3.800 0 0 0 4.800-4.800l-2.300 2.300l-2.200-.4l-.4-2.200z" fill="#5b8bdc"/><g fill="#6d94d8" stroke="#6d94d8" stroke-width="1.100"><circle cx="732" cy="786.500" r="2.200"/><circle cx="742" cy="786.500" r="1.300"/><circle cx="732" cy="797" r="1.300"/><circle cx="742" cy="796.500" r="1.700"/><path d="M732 786.500h10M732 786.500v10.500M732 786.500l10 10" fill="none"/></g><g fill="none" stroke="#6d94d8" stroke-width="1.300"><path d="M741.500 823.500a6 6 0 1 1-2-8.500"/><circle cx="736" cy="820" r="2.300" fill="#6d94d8"/><circle cx="742" cy="814.500" r="1.400" fill="#6d94d8"/></g><g fill="none" stroke="#6d94d8" stroke-width="1.300"><path d="M730.500 851a5 5 0 0 1 3-6.500l6-3.200a3 3 0 0 1 3.500 4.200l-3.200 6.500a5 5 0 0 1-9.300-1z"/><circle cx="735" cy="849.500" r="2.300"/></g><g transform="translate(728.5 867.0)" fill="none" stroke="#2fc29a" stroke-width="1.2"><path d="M3 3.5h10L8 13z"/><rect x="1.2" y="1.7" width="3.4" height="3.4" fill="#1d1d1d"/><rect x="11.4" y="1.7" width="3.4" height="3.4" fill="#1d1d1d"/><rect x="6.3" y="11" width="3.4" height="3.4" fill="#1d1d1d"/></g><g><circle cx="736.500" cy="904.500" r="6.300" fill="none" stroke="#e0667a" stroke-width="1.300"/><path d="M736.500 898.200a6.300 6.300 0 0 1 6.300 6.300h-6.300z" fill="#e0667a"/><path d="M736.500 910.800a6.300 6.300 0 0 1-6.300-6.300h6.300z" fill="#e0667a"/></g><rect x="730.300" y="932.800" width="12.400" height="12.400" fill="#e0667a"/><rect x="730.3" y="932.8" width="3.100" height="3.100" fill="#5a1f2a"/><rect x="736.5" y="932.8" width="3.100" height="3.100" fill="#5a1f2a"/><rect x="733.4" y="935.9" width="3.100" height="3.100" fill="#5a1f2a"/><rect x="739.6" y="935.9" width="3.100" height="3.100" fill="#5a1f2a"/><rect x="730.3" y="939.0" width="3.100" height="3.100" fill="#5a1f2a"/><rect x="736.5" y="939.0" width="3.100" height="3.100" fill="#5a1f2a"/><rect x="733.4" y="942.1" width="3.100" height="3.100" fill="#5a1f2a"/><rect x="739.6" y="942.1" width="3.100" height="3.100" fill="#5a1f2a"/><g><rect x="764" y="544.500" width="8" height="8" fill="#e6e6e6"/><path d="M761 546v-3.500h3.500M771.500 542.500h3.500v3.500M775 551v3.500h-3.500M764.500 554.500h-3.500v-3.500" fill="none" stroke="#e6e6e6" stroke-width="1.100"/></g><path d="M829.500 544.500l4 4l-4 4" fill="none" stroke="#c0c0c0" stroke-width="1.200"/><g><circle cx="851.3" cy="548.5" r="6.300" fill="none" stroke="#e6e6e6" stroke-width="1.300"/><path d="M851.3 542.2a6.300 6.300 0 0 1 6.300 6.300h-6.300z" fill="#e6e6e6"/><path d="M851.3 554.8a6.300 6.300 0 0 1-6.300-6.300h6.300z" fill="#e6e6e6"/></g><defs><radialGradient id="ball" cx=".35" cy=".4" r=".7"><stop offset="0" stop-color="#ffc04a"/><stop offset=".6" stop-color="#e8901a"/><stop offset="1" stop-color="#8a4c08"/></radialGradient></defs><ellipse cx="774.300" cy="589.300" rx="6" ry="6.500" fill="url(#ball)"/><path d="M769.500 640.500v5.400l5-2.700z" fill="#bdbdbd"/><g fill="#a0a0a0"><rect x="888.0" y="642.0" width="1" height="1"/><rect x="888.0" y="644.6" width="1" height="1"/><rect x="890.4" y="642.0" width="1" height="1"/><rect x="890.4" y="644.6" width="1" height="1"/><rect x="892.8" y="642.0" width="1" height="1"/><rect x="892.8" y="644.6" width="1" height="1"/><rect x="895.2" y="642.0" width="1" height="1"/><rect x="895.2" y="644.6" width="1" height="1"/></g><g><circle cx="769.8" cy="669.2" r="6.300" fill="none" stroke="#e6e6e6" stroke-width="1.300"/><path d="M769.8 662.9a6.300 6.300 0 0 1 6.300 6.300h-6.300z" fill="#e6e6e6"/><path d="M769.8 675.5a6.300 6.300 0 0 1-6.300-6.300h6.300z" fill="#e6e6e6"/></g><path d="M780.4 668.2l2.6 2.6l2.6 -2.6" fill="none" stroke="#d0d0d0" stroke-width="1.3" stroke-linecap="round" stroke-linejoin="round"/><path d="M945.700 663.500c-2 1.300-3.500 1.500-5 1.500v4.500c0 3 2.500 5 5 6c2.500-1 5-3 5-6v-4.500c-1.500 0-3-.2-5-1.500z" fill="none" stroke="#a0a0a0" stroke-width="1.100"/><g fill="none" stroke="#e6e6e6" stroke-width="1.200"><path d="M960 666.500v9h8"/><path d="M963 663.500h5l3 3v6h-8z"/><path d="M968 663.500v3h3"/></g><path d="M982 665.500l7.500 7.500M989.500 665.500l-7.500 7.500" stroke="#d0d0d0" stroke-width="1.300"/><path d="M768.500 697.500l4 4l-4 4" fill="none" stroke="#c0c0c0" stroke-width="1.200"/><path d="M766.500 726.500l4 4l4-4" fill="none" stroke="#c0c0c0" stroke-width="1.200"/><g fill="#fff"><rect x="770.500" y="752.500" width="8.500" height="5.500" rx="1.300"/><rect x="770.500" y="760" width="8.500" height="5.500" rx="1.300"/><path d="M780.500 755h2.500a1.500 1.500 0 0 1 1.500 1.500v5a1.500 1.500 0 0 1-1.500 1.500h-2.500" fill="none" stroke="#fff" stroke-width="1"/></g><circle cx="877" cy="795.300" r="4" fill="#63c763" stroke="#1a1a1a" stroke-width=".8"/><path d="M997.9 830.2l2.6 2.6l2.6 -2.6" fill="none" stroke="#d0d0d0" stroke-width="1.3" stroke-linecap="round" stroke-linejoin="round"/><path d="M997.9 854.7l2.6 2.6l2.6 -2.6" fill="none" stroke="#d0d0d0" stroke-width="1.3" stroke-linecap="round" stroke-linejoin="round"/><path d="M773.500 877.500v5.600l5.200-2.800z" fill="#d8d8d8"/><circle cx="877" cy="881.300" r="4" fill="#c7c729" stroke="#1a1a1a" stroke-width=".8"/><circle cx="877" cy="906.200" r="4" fill="#a1a1a1" stroke="#1a1a1a" stroke-width=".8"/><circle cx="877" cy="931" r="4" fill="#6363c7" stroke="#1a1a1a" stroke-width=".8"/><circle cx="877" cy="995.500" r="4" fill="#c7c729" stroke="#1a1a1a" stroke-width=".8"/></svg><span class="t " style="left:658.6px;top:82.7px;color:#e0e0e0">Options</span><div class="abs" style="left:0;top:0;white-space:nowrap;color:#fff;text-shadow:2.40px 0.00px 0 #000,2.32px 0.62px 0 #000,2.08px 1.20px 0 #000,1.70px 1.70px 0 #000,1.20px 2.08px 0 #000,0.62px 2.32px 0 #000,0.00px 2.40px 0 #000,-0.62px 2.32px 0 #000,-1.20px 2.08px 0 #000,-1.70px 1.70px 0 #000,-2.08px 1.20px 0 #000,-2.32px 0.62px 0 #000,-2.40px 0.00px 0 #000,-2.32px -0.62px 0 #000,-2.08px -1.20px 0 #000,-1.70px -1.70px 0 #000,-1.20px -2.08px 0 #000,-0.62px -2.32px 0 #000,-0.00px -2.40px 0 #000,0.62px -2.32px 0 #000,1.20px -2.08px 0 #000,1.70px -1.70px 0 #000,2.08px -1.20px 0 #000,2.32px -0.62px 0 #000,0 0 2px #000"><span class="abs" style="left:36.5px;top:31px;line-height:36px;font-family:'DejaVu Sans',sans-serif;font-size:30.5px;letter-spacing:.9px;-webkit-text-stroke:.5px #fff;">Blend</span><span class="abs" style="left:121.5px;top:29.8px;line-height:36px;transform:scaleX(1.16);transform-origin:0 50%;font-family:'Noto Sans CJK JP',sans-serif;font-size:26.8px;font-weight:500;letter-spacing:.3px;-webkit-text-stroke:.4px #fff;">ファイル</span></div></div></body></html>
